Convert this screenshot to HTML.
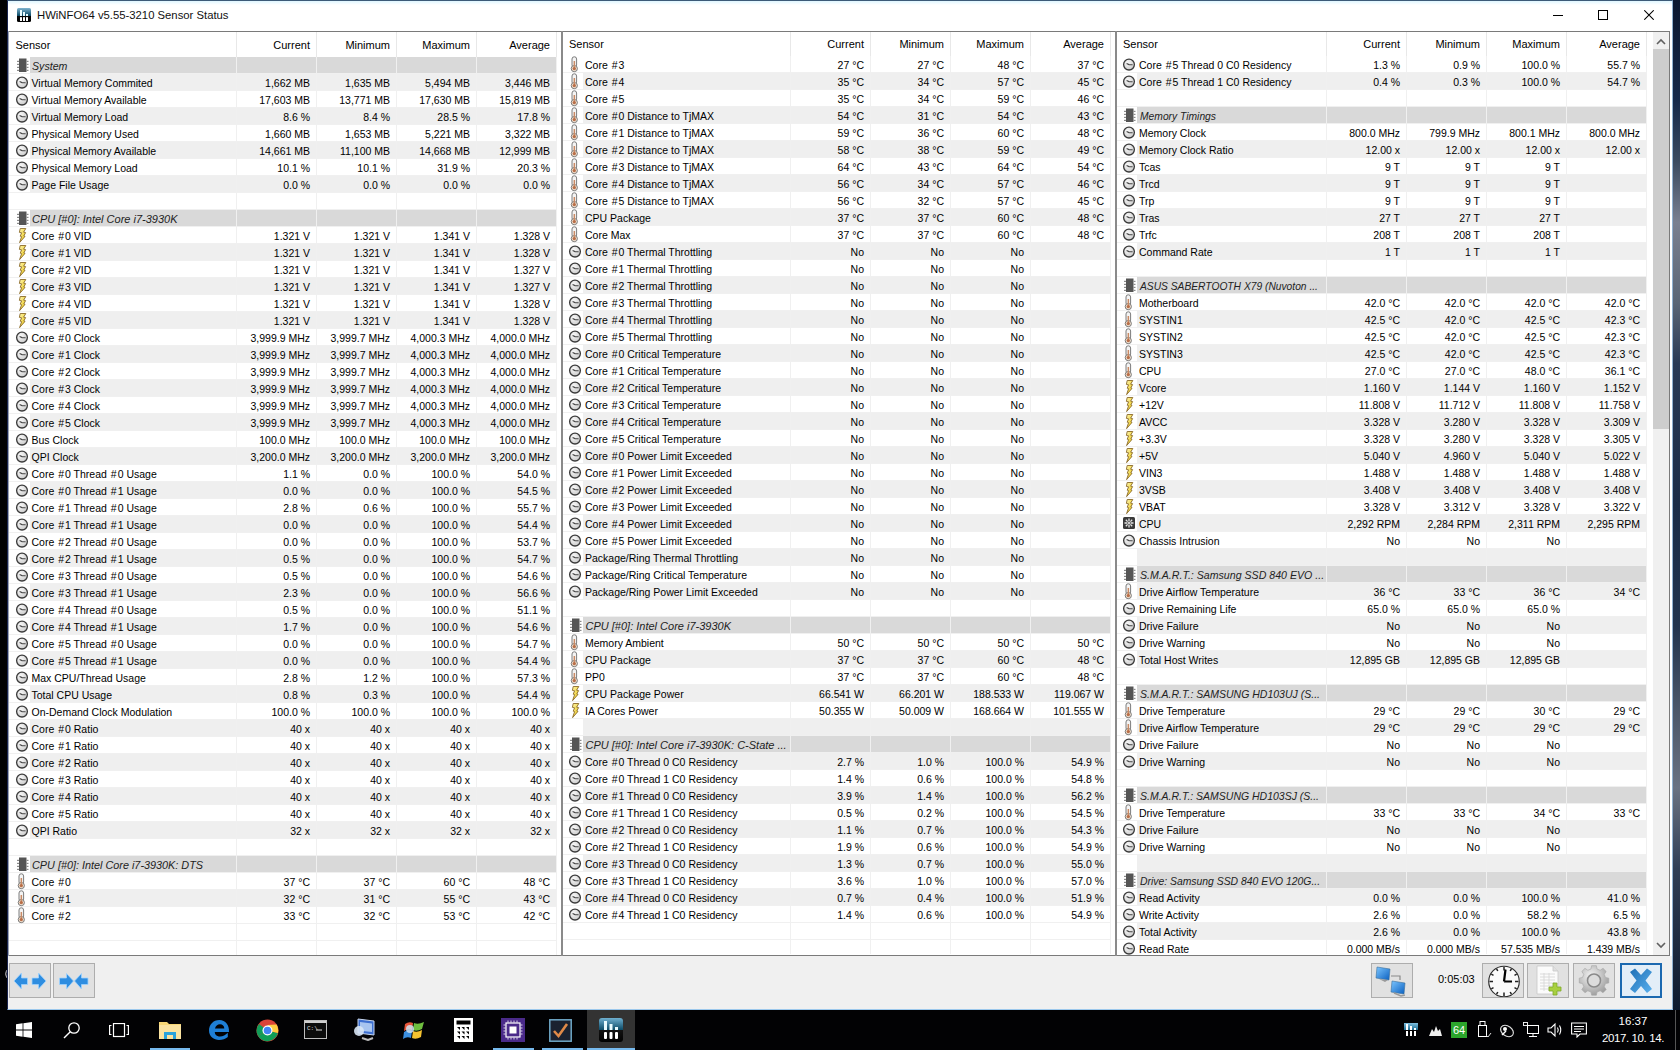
<!DOCTYPE html><html><head><meta charset="utf-8"><style>
*{margin:0;padding:0;box-sizing:border-box}
html,body{width:1680px;height:1050px;overflow:hidden;background:#000}
body{position:relative;font-family:"Liberation Sans",sans-serif;color:#000}
.abs{position:absolute}
#win{position:absolute;left:7px;top:0;width:1666px;height:1010px;background:#fff;border:1px solid #3c5a78;border-left-color:#1a2550;border-right-color:#8fb0d0;border-bottom-color:#9cc8ec}
#title{position:absolute;left:8px;top:1px;width:1664px;height:30px;background:#fff}
#ttext{position:absolute;left:37px;top:8px;font-size:11.3px;white-space:nowrap}
#body{position:absolute;left:8px;top:31px;width:1662px;height:925px;background:#fff}
.frame{position:absolute;background:#7a7a7a}
.hsep{position:absolute;top:32px;height:25px;width:1px;background:#e8e8e8}
.vg{position:absolute;top:57px;height:898px;width:1px;background:#f0f0f0}
.hg{position:absolute;height:1px;background:#f0f0f0}
.bg{position:absolute;height:16px}
.grp{background:#d9d9d9}
.str{background:#efefef}
.ht{position:absolute;font-size:11px;line-height:12px;white-space:nowrap}
.t{position:absolute;font-size:10.5px;line-height:16px;height:16px;white-space:nowrap;padding-top:1px}
.it{font-style:italic;font-size:11px;color:#222;transform-origin:0 0}
.r{text-align:right}
.hs{padding:0 1px}
.ic{position:absolute;overflow:visible}
.tb{position:absolute;border:1px solid #adadad;background:#e1e1e1;overflow:hidden}
</style></head><body>

<svg width="0" height="0" style="position:absolute">
<defs>
<radialGradient id="gclk" cx="40%" cy="35%" r="70%"><stop offset="0" stop-color="#fafafa"/><stop offset="1" stop-color="#c8c8c8"/></radialGradient>
<linearGradient id="gvolt" x1="0" y1="0" x2="1" y2="1"><stop offset="0" stop-color="#fff6b0"/><stop offset="1" stop-color="#e8c200"/></linearGradient>
<g id="i-clock"><circle cx="7" cy="7.6" r="5.4" fill="url(#gclk)" stroke="#3a3a3a" stroke-width="1.3"/><path d="M4.6 6.4 L7 7.6 L10.6 7.7" fill="none" stroke="#444" stroke-width="1.1"/></g>
<g id="i-volt"><path d="M3.2 1.5 L8.8 1.5 L6.6 5.2 L8.6 5.6 L6.8 9 L8 9.4 L2.6 15.6 L4.6 9.6 L3.2 9.2 L4.6 5.8 L2.4 5.4 Z" fill="url(#gvolt)" stroke="#8a6a2a" stroke-width="0.9" stroke-linejoin="round"/></g>
<g id="i-temp"><rect x="2" y="0.8" width="4.6" height="10.5" rx="2.2" fill="#f4f4f4" stroke="#6e6e6e" stroke-width="0.9"/><circle cx="4.3" cy="12.6" r="3.1" fill="#f2e2d2" stroke="#6e6e6e" stroke-width="0.9"/><rect x="3.6" y="5" width="1.5" height="7" fill="#c98a64"/><circle cx="4.3" cy="12.6" r="1.7" fill="#b86e48"/></g>
<g id="i-fan"><rect x="1" y="1" width="12" height="12" rx="1.5" fill="#3a3a3a"/><g stroke="#e6e6e6" stroke-width="1.3"><path d="M7 2.5V5.5M7 8.5V11.5M2.5 7H5.5M8.5 7H11.5M3.8 3.8L5.6 5.6M8.4 8.4L10.2 10.2M10.2 3.8L8.4 5.6M5.6 8.4L3.8 10.2"/></g><rect x="6" y="6" width="2" height="2" fill="#ccc"/></g>
<g id="i-chip"><rect x="4" y="1.5" width="7.5" height="13.5" fill="#555"/><g fill="#8a8a8a"><rect x="2" y="3.8" width="2" height="1.2"/><rect x="2" y="6.8" width="2" height="1.2"/><rect x="2" y="9.8" width="2" height="1.2"/><rect x="2" y="12.8" width="2" height="1.2"/><rect x="11.5" y="3.8" width="2" height="1.2"/><rect x="11.5" y="6.8" width="2" height="1.2"/><rect x="11.5" y="9.8" width="2" height="1.2"/><rect x="11.5" y="12.8" width="2" height="1.2"/></g></g>
</defs></svg>


<div class="abs" style="left:0;top:0;width:7px;height:1010px;background:#010203"></div>
<svg class="abs" style="left:2px;top:968px" width="6" height="12" viewBox="0 0 6 12"><path d="M5.5 1.5 Q2 5.8 5.5 10.5" fill="none" stroke="#d8d8e0" stroke-width="1"/></svg>
<div class="abs" style="left:1673px;top:0;width:7px;height:1010px;background:linear-gradient(180deg,#0c1830 0%,#16294a 10%,#3a4a60 16%,#7a8090 22%,#5a6575 30%,#2a3a55 36%,#1a2c48 50%,#22344e 62%,#4a5668 70%,#6a7282 78%,#303e55 86%,#0e1a2e 100%)"></div>

<div id="win"></div>

<div class="abs" style="left:8px;top:1px;width:1664px;height:4px;background:linear-gradient(#dff6ff,#fff)"></div>
<svg class="abs" style="left:17px;top:8px" width="14" height="14" viewBox="0 0 14 14">
 <defs><linearGradient id="gti" x1="0" y1="0" x2="0" y2="1"><stop offset="0" stop-color="#7fb4d0"/><stop offset="0.55" stop-color="#0b4a66"/><stop offset="0.56" stop-color="#050505"/><stop offset="1" stop-color="#000"/></linearGradient></defs>
 <rect x="0" y="0" width="14" height="14" rx="1.5" fill="url(#gti)"/>
 <rect x="3" y="2" width="2" height="6" fill="#e8fbff"/><rect x="6" y="4" width="2" height="4" fill="#e8fbff"/><rect x="9" y="6" width="2" height="2" fill="#e8fbff"/>
 <rect x="3" y="9" width="2" height="4" rx="0.6" fill="#fff"/><rect x="6" y="9" width="2" height="4" rx="0.6" fill="#fff"/><rect x="9" y="9" width="2" height="4" rx="0.6" fill="#fff"/>
</svg>
<div class="abs" style="left:37px;top:9px;font-size:11.3px;white-space:nowrap;color:#111">HWiNFO64 v5.55-3210 Sensor Status</div>
<div class="abs" style="left:1553px;top:15px;width:10px;height:1px;background:#000"></div>
<div class="abs" style="left:1598px;top:10px;width:10px;height:10px;border:1px solid #000"></div>
<svg class="abs" style="left:1644px;top:10px" width="10" height="10" viewBox="0 0 10 10"><path d="M0.3 0.3L9.7 9.7M9.7 0.3L0.3 9.7" stroke="#000" stroke-width="1.05"/></svg>

<div id="panels" style="position:absolute;left:0;top:0;width:1680px;height:956px;overflow:hidden">
<div class="abs" style="left:8px;top:31px;width:1662px;height:925px;background:#fff"></div>
<div class="hsep" style="left:236px;height:25px"></div>
<div class="ht" style="left:15.5px;top:39px">Sensor</div>
<div class="hsep" style="left:316px;height:25px"></div>
<div class="ht r" style="left:236px;width:74px;top:39px">Current</div>
<div class="hsep" style="left:396px;height:25px"></div>
<div class="ht r" style="left:316px;width:74px;top:39px">Minimum</div>
<div class="hsep" style="left:476px;height:25px"></div>
<div class="ht r" style="left:396px;width:74px;top:39px">Maximum</div>
<div class="hsep" style="left:556px;height:25px"></div>
<div class="ht r" style="left:476px;width:74px;top:39px">Average</div>
<div class="vg" style="left:236px;top:57px"></div>
<div class="vg" style="left:316px;top:57px"></div>
<div class="vg" style="left:396px;top:57px"></div>
<div class="vg" style="left:476px;top:57px"></div>
<div class="vg" style="left:556px;top:57px"></div>
<div class="hg" style="left:9px;width:548px;top:73px"></div>
<div class="hg" style="left:9px;width:548px;top:90px"></div>
<div class="hg" style="left:9px;width:548px;top:107px"></div>
<div class="hg" style="left:9px;width:548px;top:124px"></div>
<div class="hg" style="left:9px;width:548px;top:141px"></div>
<div class="hg" style="left:9px;width:548px;top:158px"></div>
<div class="hg" style="left:9px;width:548px;top:175px"></div>
<div class="hg" style="left:9px;width:548px;top:192px"></div>
<div class="hg" style="left:9px;width:548px;top:209px"></div>
<div class="hg" style="left:9px;width:548px;top:226px"></div>
<div class="hg" style="left:9px;width:548px;top:243px"></div>
<div class="hg" style="left:9px;width:548px;top:260px"></div>
<div class="hg" style="left:9px;width:548px;top:277px"></div>
<div class="hg" style="left:9px;width:548px;top:294px"></div>
<div class="hg" style="left:9px;width:548px;top:311px"></div>
<div class="hg" style="left:9px;width:548px;top:328px"></div>
<div class="hg" style="left:9px;width:548px;top:345px"></div>
<div class="hg" style="left:9px;width:548px;top:362px"></div>
<div class="hg" style="left:9px;width:548px;top:379px"></div>
<div class="hg" style="left:9px;width:548px;top:396px"></div>
<div class="hg" style="left:9px;width:548px;top:413px"></div>
<div class="hg" style="left:9px;width:548px;top:430px"></div>
<div class="hg" style="left:9px;width:548px;top:447px"></div>
<div class="hg" style="left:9px;width:548px;top:464px"></div>
<div class="hg" style="left:9px;width:548px;top:481px"></div>
<div class="hg" style="left:9px;width:548px;top:498px"></div>
<div class="hg" style="left:9px;width:548px;top:515px"></div>
<div class="hg" style="left:9px;width:548px;top:532px"></div>
<div class="hg" style="left:9px;width:548px;top:549px"></div>
<div class="hg" style="left:9px;width:548px;top:566px"></div>
<div class="hg" style="left:9px;width:548px;top:583px"></div>
<div class="hg" style="left:9px;width:548px;top:600px"></div>
<div class="hg" style="left:9px;width:548px;top:617px"></div>
<div class="hg" style="left:9px;width:548px;top:634px"></div>
<div class="hg" style="left:9px;width:548px;top:651px"></div>
<div class="hg" style="left:9px;width:548px;top:668px"></div>
<div class="hg" style="left:9px;width:548px;top:685px"></div>
<div class="hg" style="left:9px;width:548px;top:702px"></div>
<div class="hg" style="left:9px;width:548px;top:719px"></div>
<div class="hg" style="left:9px;width:548px;top:736px"></div>
<div class="hg" style="left:9px;width:548px;top:753px"></div>
<div class="hg" style="left:9px;width:548px;top:770px"></div>
<div class="hg" style="left:9px;width:548px;top:787px"></div>
<div class="hg" style="left:9px;width:548px;top:804px"></div>
<div class="hg" style="left:9px;width:548px;top:821px"></div>
<div class="hg" style="left:9px;width:548px;top:838px"></div>
<div class="hg" style="left:9px;width:548px;top:855px"></div>
<div class="hg" style="left:9px;width:548px;top:872px"></div>
<div class="hg" style="left:9px;width:548px;top:889px"></div>
<div class="hg" style="left:9px;width:548px;top:906px"></div>
<div class="hg" style="left:9px;width:548px;top:923px"></div>
<div class="hg" style="left:9px;width:548px;top:940px"></div>
<div class="bg grp" style="left:30px;top:57px;width:206px"></div>
<div class="bg grp" style="left:237px;top:57px;width:79px"></div>
<div class="bg grp" style="left:317px;top:57px;width:79px"></div>
<div class="bg grp" style="left:397px;top:57px;width:79px"></div>
<div class="bg grp" style="left:477px;top:57px;width:79px"></div>
<svg class="ic" width="14" height="16" viewBox="0 0 14 16" style="left:15px;top:57px"><use href="#i-chip"/></svg>
<div class="t it" style="left:32.0px;top:57px;transform:scaleX(0.965)">System</div>
<div class="bg str" style="left:30px;top:74px;width:206px"></div>
<div class="bg str" style="left:237px;top:74px;width:79px"></div>
<div class="bg str" style="left:317px;top:74px;width:79px"></div>
<div class="bg str" style="left:397px;top:74px;width:79px"></div>
<div class="bg str" style="left:477px;top:74px;width:79px"></div>
<svg class="ic" width="14" height="14" viewBox="0 0 14 14" style="left:15px;top:75px"><use href="#i-clock"/></svg>
<div class="t" style="left:31.5px;top:74px">Virtual Memory Commited</div>
<div class="t r" style="left:236px;width:74px;top:74px">1,662 MB</div>
<div class="t r" style="left:316px;width:74px;top:74px">1,635 MB</div>
<div class="t r" style="left:396px;width:74px;top:74px">5,494 MB</div>
<div class="t r" style="left:476px;width:74px;top:74px">3,446 MB</div>
<svg class="ic" width="14" height="14" viewBox="0 0 14 14" style="left:15px;top:92px"><use href="#i-clock"/></svg>
<div class="t" style="left:31.5px;top:91px">Virtual Memory Available</div>
<div class="t r" style="left:236px;width:74px;top:91px">17,603 MB</div>
<div class="t r" style="left:316px;width:74px;top:91px">13,771 MB</div>
<div class="t r" style="left:396px;width:74px;top:91px">17,630 MB</div>
<div class="t r" style="left:476px;width:74px;top:91px">15,819 MB</div>
<div class="bg str" style="left:30px;top:108px;width:206px"></div>
<div class="bg str" style="left:237px;top:108px;width:79px"></div>
<div class="bg str" style="left:317px;top:108px;width:79px"></div>
<div class="bg str" style="left:397px;top:108px;width:79px"></div>
<div class="bg str" style="left:477px;top:108px;width:79px"></div>
<svg class="ic" width="14" height="14" viewBox="0 0 14 14" style="left:15px;top:109px"><use href="#i-clock"/></svg>
<div class="t" style="left:31.5px;top:108px">Virtual Memory Load</div>
<div class="t r" style="left:236px;width:74px;top:108px">8.6 %</div>
<div class="t r" style="left:316px;width:74px;top:108px">8.4 %</div>
<div class="t r" style="left:396px;width:74px;top:108px">28.5 %</div>
<div class="t r" style="left:476px;width:74px;top:108px">17.8 %</div>
<svg class="ic" width="14" height="14" viewBox="0 0 14 14" style="left:15px;top:126px"><use href="#i-clock"/></svg>
<div class="t" style="left:31.5px;top:125px">Physical Memory Used</div>
<div class="t r" style="left:236px;width:74px;top:125px">1,660 MB</div>
<div class="t r" style="left:316px;width:74px;top:125px">1,653 MB</div>
<div class="t r" style="left:396px;width:74px;top:125px">5,221 MB</div>
<div class="t r" style="left:476px;width:74px;top:125px">3,322 MB</div>
<div class="bg str" style="left:30px;top:142px;width:206px"></div>
<div class="bg str" style="left:237px;top:142px;width:79px"></div>
<div class="bg str" style="left:317px;top:142px;width:79px"></div>
<div class="bg str" style="left:397px;top:142px;width:79px"></div>
<div class="bg str" style="left:477px;top:142px;width:79px"></div>
<svg class="ic" width="14" height="14" viewBox="0 0 14 14" style="left:15px;top:143px"><use href="#i-clock"/></svg>
<div class="t" style="left:31.5px;top:142px">Physical Memory Available</div>
<div class="t r" style="left:236px;width:74px;top:142px">14,661 MB</div>
<div class="t r" style="left:316px;width:74px;top:142px">11,100 MB</div>
<div class="t r" style="left:396px;width:74px;top:142px">14,668 MB</div>
<div class="t r" style="left:476px;width:74px;top:142px">12,999 MB</div>
<svg class="ic" width="14" height="14" viewBox="0 0 14 14" style="left:15px;top:160px"><use href="#i-clock"/></svg>
<div class="t" style="left:31.5px;top:159px">Physical Memory Load</div>
<div class="t r" style="left:236px;width:74px;top:159px">10.1 %</div>
<div class="t r" style="left:316px;width:74px;top:159px">10.1 %</div>
<div class="t r" style="left:396px;width:74px;top:159px">31.9 %</div>
<div class="t r" style="left:476px;width:74px;top:159px">20.3 %</div>
<div class="bg str" style="left:30px;top:176px;width:206px"></div>
<div class="bg str" style="left:237px;top:176px;width:79px"></div>
<div class="bg str" style="left:317px;top:176px;width:79px"></div>
<div class="bg str" style="left:397px;top:176px;width:79px"></div>
<div class="bg str" style="left:477px;top:176px;width:79px"></div>
<svg class="ic" width="14" height="14" viewBox="0 0 14 14" style="left:15px;top:177px"><use href="#i-clock"/></svg>
<div class="t" style="left:31.5px;top:176px">Page File Usage</div>
<div class="t r" style="left:236px;width:74px;top:176px">0.0 %</div>
<div class="t r" style="left:316px;width:74px;top:176px">0.0 %</div>
<div class="t r" style="left:396px;width:74px;top:176px">0.0 %</div>
<div class="t r" style="left:476px;width:74px;top:176px">0.0 %</div>
<div class="bg grp" style="left:30px;top:210px;width:206px"></div>
<div class="bg grp" style="left:237px;top:210px;width:79px"></div>
<div class="bg grp" style="left:317px;top:210px;width:79px"></div>
<div class="bg grp" style="left:397px;top:210px;width:79px"></div>
<div class="bg grp" style="left:477px;top:210px;width:79px"></div>
<svg class="ic" width="14" height="16" viewBox="0 0 14 16" style="left:15px;top:210px"><use href="#i-chip"/></svg>
<div class="t it" style="left:32.0px;top:210px;transform:scaleX(1.0)">CPU [#0]: Intel Core i7-3930K</div>
<svg class="ic" width="10" height="17" viewBox="0 0 10 17" style="left:17px;top:227px"><use href="#i-volt"/></svg>
<div class="t" style="left:31.5px;top:227px">Core <span class="hs">#</span>0 VID</div>
<div class="t r" style="left:236px;width:74px;top:227px">1.321 V</div>
<div class="t r" style="left:316px;width:74px;top:227px">1.321 V</div>
<div class="t r" style="left:396px;width:74px;top:227px">1.341 V</div>
<div class="t r" style="left:476px;width:74px;top:227px">1.328 V</div>
<div class="bg str" style="left:30px;top:244px;width:206px"></div>
<div class="bg str" style="left:237px;top:244px;width:79px"></div>
<div class="bg str" style="left:317px;top:244px;width:79px"></div>
<div class="bg str" style="left:397px;top:244px;width:79px"></div>
<div class="bg str" style="left:477px;top:244px;width:79px"></div>
<svg class="ic" width="10" height="17" viewBox="0 0 10 17" style="left:17px;top:244px"><use href="#i-volt"/></svg>
<div class="t" style="left:31.5px;top:244px">Core <span class="hs">#</span>1 VID</div>
<div class="t r" style="left:236px;width:74px;top:244px">1.321 V</div>
<div class="t r" style="left:316px;width:74px;top:244px">1.321 V</div>
<div class="t r" style="left:396px;width:74px;top:244px">1.341 V</div>
<div class="t r" style="left:476px;width:74px;top:244px">1.328 V</div>
<svg class="ic" width="10" height="17" viewBox="0 0 10 17" style="left:17px;top:261px"><use href="#i-volt"/></svg>
<div class="t" style="left:31.5px;top:261px">Core <span class="hs">#</span>2 VID</div>
<div class="t r" style="left:236px;width:74px;top:261px">1.321 V</div>
<div class="t r" style="left:316px;width:74px;top:261px">1.321 V</div>
<div class="t r" style="left:396px;width:74px;top:261px">1.341 V</div>
<div class="t r" style="left:476px;width:74px;top:261px">1.327 V</div>
<div class="bg str" style="left:30px;top:278px;width:206px"></div>
<div class="bg str" style="left:237px;top:278px;width:79px"></div>
<div class="bg str" style="left:317px;top:278px;width:79px"></div>
<div class="bg str" style="left:397px;top:278px;width:79px"></div>
<div class="bg str" style="left:477px;top:278px;width:79px"></div>
<svg class="ic" width="10" height="17" viewBox="0 0 10 17" style="left:17px;top:278px"><use href="#i-volt"/></svg>
<div class="t" style="left:31.5px;top:278px">Core <span class="hs">#</span>3 VID</div>
<div class="t r" style="left:236px;width:74px;top:278px">1.321 V</div>
<div class="t r" style="left:316px;width:74px;top:278px">1.321 V</div>
<div class="t r" style="left:396px;width:74px;top:278px">1.341 V</div>
<div class="t r" style="left:476px;width:74px;top:278px">1.327 V</div>
<svg class="ic" width="10" height="17" viewBox="0 0 10 17" style="left:17px;top:295px"><use href="#i-volt"/></svg>
<div class="t" style="left:31.5px;top:295px">Core <span class="hs">#</span>4 VID</div>
<div class="t r" style="left:236px;width:74px;top:295px">1.321 V</div>
<div class="t r" style="left:316px;width:74px;top:295px">1.321 V</div>
<div class="t r" style="left:396px;width:74px;top:295px">1.341 V</div>
<div class="t r" style="left:476px;width:74px;top:295px">1.328 V</div>
<div class="bg str" style="left:30px;top:312px;width:206px"></div>
<div class="bg str" style="left:237px;top:312px;width:79px"></div>
<div class="bg str" style="left:317px;top:312px;width:79px"></div>
<div class="bg str" style="left:397px;top:312px;width:79px"></div>
<div class="bg str" style="left:477px;top:312px;width:79px"></div>
<svg class="ic" width="10" height="17" viewBox="0 0 10 17" style="left:17px;top:312px"><use href="#i-volt"/></svg>
<div class="t" style="left:31.5px;top:312px">Core <span class="hs">#</span>5 VID</div>
<div class="t r" style="left:236px;width:74px;top:312px">1.321 V</div>
<div class="t r" style="left:316px;width:74px;top:312px">1.321 V</div>
<div class="t r" style="left:396px;width:74px;top:312px">1.341 V</div>
<div class="t r" style="left:476px;width:74px;top:312px">1.328 V</div>
<svg class="ic" width="14" height="14" viewBox="0 0 14 14" style="left:15px;top:330px"><use href="#i-clock"/></svg>
<div class="t" style="left:31.5px;top:329px">Core <span class="hs">#</span>0 Clock</div>
<div class="t r" style="left:236px;width:74px;top:329px">3,999.9 MHz</div>
<div class="t r" style="left:316px;width:74px;top:329px">3,999.7 MHz</div>
<div class="t r" style="left:396px;width:74px;top:329px">4,000.3 MHz</div>
<div class="t r" style="left:476px;width:74px;top:329px">4,000.0 MHz</div>
<div class="bg str" style="left:30px;top:346px;width:206px"></div>
<div class="bg str" style="left:237px;top:346px;width:79px"></div>
<div class="bg str" style="left:317px;top:346px;width:79px"></div>
<div class="bg str" style="left:397px;top:346px;width:79px"></div>
<div class="bg str" style="left:477px;top:346px;width:79px"></div>
<svg class="ic" width="14" height="14" viewBox="0 0 14 14" style="left:15px;top:347px"><use href="#i-clock"/></svg>
<div class="t" style="left:31.5px;top:346px">Core <span class="hs">#</span>1 Clock</div>
<div class="t r" style="left:236px;width:74px;top:346px">3,999.9 MHz</div>
<div class="t r" style="left:316px;width:74px;top:346px">3,999.7 MHz</div>
<div class="t r" style="left:396px;width:74px;top:346px">4,000.3 MHz</div>
<div class="t r" style="left:476px;width:74px;top:346px">4,000.0 MHz</div>
<svg class="ic" width="14" height="14" viewBox="0 0 14 14" style="left:15px;top:364px"><use href="#i-clock"/></svg>
<div class="t" style="left:31.5px;top:363px">Core <span class="hs">#</span>2 Clock</div>
<div class="t r" style="left:236px;width:74px;top:363px">3,999.9 MHz</div>
<div class="t r" style="left:316px;width:74px;top:363px">3,999.7 MHz</div>
<div class="t r" style="left:396px;width:74px;top:363px">4,000.3 MHz</div>
<div class="t r" style="left:476px;width:74px;top:363px">4,000.0 MHz</div>
<div class="bg str" style="left:30px;top:380px;width:206px"></div>
<div class="bg str" style="left:237px;top:380px;width:79px"></div>
<div class="bg str" style="left:317px;top:380px;width:79px"></div>
<div class="bg str" style="left:397px;top:380px;width:79px"></div>
<div class="bg str" style="left:477px;top:380px;width:79px"></div>
<svg class="ic" width="14" height="14" viewBox="0 0 14 14" style="left:15px;top:381px"><use href="#i-clock"/></svg>
<div class="t" style="left:31.5px;top:380px">Core <span class="hs">#</span>3 Clock</div>
<div class="t r" style="left:236px;width:74px;top:380px">3,999.9 MHz</div>
<div class="t r" style="left:316px;width:74px;top:380px">3,999.7 MHz</div>
<div class="t r" style="left:396px;width:74px;top:380px">4,000.3 MHz</div>
<div class="t r" style="left:476px;width:74px;top:380px">4,000.0 MHz</div>
<svg class="ic" width="14" height="14" viewBox="0 0 14 14" style="left:15px;top:398px"><use href="#i-clock"/></svg>
<div class="t" style="left:31.5px;top:397px">Core <span class="hs">#</span>4 Clock</div>
<div class="t r" style="left:236px;width:74px;top:397px">3,999.9 MHz</div>
<div class="t r" style="left:316px;width:74px;top:397px">3,999.7 MHz</div>
<div class="t r" style="left:396px;width:74px;top:397px">4,000.3 MHz</div>
<div class="t r" style="left:476px;width:74px;top:397px">4,000.0 MHz</div>
<div class="bg str" style="left:30px;top:414px;width:206px"></div>
<div class="bg str" style="left:237px;top:414px;width:79px"></div>
<div class="bg str" style="left:317px;top:414px;width:79px"></div>
<div class="bg str" style="left:397px;top:414px;width:79px"></div>
<div class="bg str" style="left:477px;top:414px;width:79px"></div>
<svg class="ic" width="14" height="14" viewBox="0 0 14 14" style="left:15px;top:415px"><use href="#i-clock"/></svg>
<div class="t" style="left:31.5px;top:414px">Core <span class="hs">#</span>5 Clock</div>
<div class="t r" style="left:236px;width:74px;top:414px">3,999.9 MHz</div>
<div class="t r" style="left:316px;width:74px;top:414px">3,999.7 MHz</div>
<div class="t r" style="left:396px;width:74px;top:414px">4,000.3 MHz</div>
<div class="t r" style="left:476px;width:74px;top:414px">4,000.0 MHz</div>
<svg class="ic" width="14" height="14" viewBox="0 0 14 14" style="left:15px;top:432px"><use href="#i-clock"/></svg>
<div class="t" style="left:31.5px;top:431px">Bus Clock</div>
<div class="t r" style="left:236px;width:74px;top:431px">100.0 MHz</div>
<div class="t r" style="left:316px;width:74px;top:431px">100.0 MHz</div>
<div class="t r" style="left:396px;width:74px;top:431px">100.0 MHz</div>
<div class="t r" style="left:476px;width:74px;top:431px">100.0 MHz</div>
<div class="bg str" style="left:30px;top:448px;width:206px"></div>
<div class="bg str" style="left:237px;top:448px;width:79px"></div>
<div class="bg str" style="left:317px;top:448px;width:79px"></div>
<div class="bg str" style="left:397px;top:448px;width:79px"></div>
<div class="bg str" style="left:477px;top:448px;width:79px"></div>
<svg class="ic" width="14" height="14" viewBox="0 0 14 14" style="left:15px;top:449px"><use href="#i-clock"/></svg>
<div class="t" style="left:31.5px;top:448px">QPI Clock</div>
<div class="t r" style="left:236px;width:74px;top:448px">3,200.0 MHz</div>
<div class="t r" style="left:316px;width:74px;top:448px">3,200.0 MHz</div>
<div class="t r" style="left:396px;width:74px;top:448px">3,200.0 MHz</div>
<div class="t r" style="left:476px;width:74px;top:448px">3,200.0 MHz</div>
<svg class="ic" width="14" height="14" viewBox="0 0 14 14" style="left:15px;top:466px"><use href="#i-clock"/></svg>
<div class="t" style="left:31.5px;top:465px">Core <span class="hs">#</span>0 Thread <span class="hs">#</span>0 Usage</div>
<div class="t r" style="left:236px;width:74px;top:465px">1.1 %</div>
<div class="t r" style="left:316px;width:74px;top:465px">0.0 %</div>
<div class="t r" style="left:396px;width:74px;top:465px">100.0 %</div>
<div class="t r" style="left:476px;width:74px;top:465px">54.0 %</div>
<div class="bg str" style="left:30px;top:482px;width:206px"></div>
<div class="bg str" style="left:237px;top:482px;width:79px"></div>
<div class="bg str" style="left:317px;top:482px;width:79px"></div>
<div class="bg str" style="left:397px;top:482px;width:79px"></div>
<div class="bg str" style="left:477px;top:482px;width:79px"></div>
<svg class="ic" width="14" height="14" viewBox="0 0 14 14" style="left:15px;top:483px"><use href="#i-clock"/></svg>
<div class="t" style="left:31.5px;top:482px">Core <span class="hs">#</span>0 Thread <span class="hs">#</span>1 Usage</div>
<div class="t r" style="left:236px;width:74px;top:482px">0.0 %</div>
<div class="t r" style="left:316px;width:74px;top:482px">0.0 %</div>
<div class="t r" style="left:396px;width:74px;top:482px">100.0 %</div>
<div class="t r" style="left:476px;width:74px;top:482px">54.5 %</div>
<svg class="ic" width="14" height="14" viewBox="0 0 14 14" style="left:15px;top:500px"><use href="#i-clock"/></svg>
<div class="t" style="left:31.5px;top:499px">Core <span class="hs">#</span>1 Thread <span class="hs">#</span>0 Usage</div>
<div class="t r" style="left:236px;width:74px;top:499px">2.8 %</div>
<div class="t r" style="left:316px;width:74px;top:499px">0.6 %</div>
<div class="t r" style="left:396px;width:74px;top:499px">100.0 %</div>
<div class="t r" style="left:476px;width:74px;top:499px">55.7 %</div>
<div class="bg str" style="left:30px;top:516px;width:206px"></div>
<div class="bg str" style="left:237px;top:516px;width:79px"></div>
<div class="bg str" style="left:317px;top:516px;width:79px"></div>
<div class="bg str" style="left:397px;top:516px;width:79px"></div>
<div class="bg str" style="left:477px;top:516px;width:79px"></div>
<svg class="ic" width="14" height="14" viewBox="0 0 14 14" style="left:15px;top:517px"><use href="#i-clock"/></svg>
<div class="t" style="left:31.5px;top:516px">Core <span class="hs">#</span>1 Thread <span class="hs">#</span>1 Usage</div>
<div class="t r" style="left:236px;width:74px;top:516px">0.0 %</div>
<div class="t r" style="left:316px;width:74px;top:516px">0.0 %</div>
<div class="t r" style="left:396px;width:74px;top:516px">100.0 %</div>
<div class="t r" style="left:476px;width:74px;top:516px">54.4 %</div>
<svg class="ic" width="14" height="14" viewBox="0 0 14 14" style="left:15px;top:534px"><use href="#i-clock"/></svg>
<div class="t" style="left:31.5px;top:533px">Core <span class="hs">#</span>2 Thread <span class="hs">#</span>0 Usage</div>
<div class="t r" style="left:236px;width:74px;top:533px">0.0 %</div>
<div class="t r" style="left:316px;width:74px;top:533px">0.0 %</div>
<div class="t r" style="left:396px;width:74px;top:533px">100.0 %</div>
<div class="t r" style="left:476px;width:74px;top:533px">53.7 %</div>
<div class="bg str" style="left:30px;top:550px;width:206px"></div>
<div class="bg str" style="left:237px;top:550px;width:79px"></div>
<div class="bg str" style="left:317px;top:550px;width:79px"></div>
<div class="bg str" style="left:397px;top:550px;width:79px"></div>
<div class="bg str" style="left:477px;top:550px;width:79px"></div>
<svg class="ic" width="14" height="14" viewBox="0 0 14 14" style="left:15px;top:551px"><use href="#i-clock"/></svg>
<div class="t" style="left:31.5px;top:550px">Core <span class="hs">#</span>2 Thread <span class="hs">#</span>1 Usage</div>
<div class="t r" style="left:236px;width:74px;top:550px">0.5 %</div>
<div class="t r" style="left:316px;width:74px;top:550px">0.0 %</div>
<div class="t r" style="left:396px;width:74px;top:550px">100.0 %</div>
<div class="t r" style="left:476px;width:74px;top:550px">54.7 %</div>
<svg class="ic" width="14" height="14" viewBox="0 0 14 14" style="left:15px;top:568px"><use href="#i-clock"/></svg>
<div class="t" style="left:31.5px;top:567px">Core <span class="hs">#</span>3 Thread <span class="hs">#</span>0 Usage</div>
<div class="t r" style="left:236px;width:74px;top:567px">0.5 %</div>
<div class="t r" style="left:316px;width:74px;top:567px">0.0 %</div>
<div class="t r" style="left:396px;width:74px;top:567px">100.0 %</div>
<div class="t r" style="left:476px;width:74px;top:567px">54.6 %</div>
<div class="bg str" style="left:30px;top:584px;width:206px"></div>
<div class="bg str" style="left:237px;top:584px;width:79px"></div>
<div class="bg str" style="left:317px;top:584px;width:79px"></div>
<div class="bg str" style="left:397px;top:584px;width:79px"></div>
<div class="bg str" style="left:477px;top:584px;width:79px"></div>
<svg class="ic" width="14" height="14" viewBox="0 0 14 14" style="left:15px;top:585px"><use href="#i-clock"/></svg>
<div class="t" style="left:31.5px;top:584px">Core <span class="hs">#</span>3 Thread <span class="hs">#</span>1 Usage</div>
<div class="t r" style="left:236px;width:74px;top:584px">2.3 %</div>
<div class="t r" style="left:316px;width:74px;top:584px">0.0 %</div>
<div class="t r" style="left:396px;width:74px;top:584px">100.0 %</div>
<div class="t r" style="left:476px;width:74px;top:584px">56.6 %</div>
<svg class="ic" width="14" height="14" viewBox="0 0 14 14" style="left:15px;top:602px"><use href="#i-clock"/></svg>
<div class="t" style="left:31.5px;top:601px">Core <span class="hs">#</span>4 Thread <span class="hs">#</span>0 Usage</div>
<div class="t r" style="left:236px;width:74px;top:601px">0.5 %</div>
<div class="t r" style="left:316px;width:74px;top:601px">0.0 %</div>
<div class="t r" style="left:396px;width:74px;top:601px">100.0 %</div>
<div class="t r" style="left:476px;width:74px;top:601px">51.1 %</div>
<div class="bg str" style="left:30px;top:618px;width:206px"></div>
<div class="bg str" style="left:237px;top:618px;width:79px"></div>
<div class="bg str" style="left:317px;top:618px;width:79px"></div>
<div class="bg str" style="left:397px;top:618px;width:79px"></div>
<div class="bg str" style="left:477px;top:618px;width:79px"></div>
<svg class="ic" width="14" height="14" viewBox="0 0 14 14" style="left:15px;top:619px"><use href="#i-clock"/></svg>
<div class="t" style="left:31.5px;top:618px">Core <span class="hs">#</span>4 Thread <span class="hs">#</span>1 Usage</div>
<div class="t r" style="left:236px;width:74px;top:618px">1.7 %</div>
<div class="t r" style="left:316px;width:74px;top:618px">0.0 %</div>
<div class="t r" style="left:396px;width:74px;top:618px">100.0 %</div>
<div class="t r" style="left:476px;width:74px;top:618px">54.6 %</div>
<svg class="ic" width="14" height="14" viewBox="0 0 14 14" style="left:15px;top:636px"><use href="#i-clock"/></svg>
<div class="t" style="left:31.5px;top:635px">Core <span class="hs">#</span>5 Thread <span class="hs">#</span>0 Usage</div>
<div class="t r" style="left:236px;width:74px;top:635px">0.0 %</div>
<div class="t r" style="left:316px;width:74px;top:635px">0.0 %</div>
<div class="t r" style="left:396px;width:74px;top:635px">100.0 %</div>
<div class="t r" style="left:476px;width:74px;top:635px">54.7 %</div>
<div class="bg str" style="left:30px;top:652px;width:206px"></div>
<div class="bg str" style="left:237px;top:652px;width:79px"></div>
<div class="bg str" style="left:317px;top:652px;width:79px"></div>
<div class="bg str" style="left:397px;top:652px;width:79px"></div>
<div class="bg str" style="left:477px;top:652px;width:79px"></div>
<svg class="ic" width="14" height="14" viewBox="0 0 14 14" style="left:15px;top:653px"><use href="#i-clock"/></svg>
<div class="t" style="left:31.5px;top:652px">Core <span class="hs">#</span>5 Thread <span class="hs">#</span>1 Usage</div>
<div class="t r" style="left:236px;width:74px;top:652px">0.0 %</div>
<div class="t r" style="left:316px;width:74px;top:652px">0.0 %</div>
<div class="t r" style="left:396px;width:74px;top:652px">100.0 %</div>
<div class="t r" style="left:476px;width:74px;top:652px">54.4 %</div>
<svg class="ic" width="14" height="14" viewBox="0 0 14 14" style="left:15px;top:670px"><use href="#i-clock"/></svg>
<div class="t" style="left:31.5px;top:669px">Max CPU/Thread Usage</div>
<div class="t r" style="left:236px;width:74px;top:669px">2.8 %</div>
<div class="t r" style="left:316px;width:74px;top:669px">1.2 %</div>
<div class="t r" style="left:396px;width:74px;top:669px">100.0 %</div>
<div class="t r" style="left:476px;width:74px;top:669px">57.3 %</div>
<div class="bg str" style="left:30px;top:686px;width:206px"></div>
<div class="bg str" style="left:237px;top:686px;width:79px"></div>
<div class="bg str" style="left:317px;top:686px;width:79px"></div>
<div class="bg str" style="left:397px;top:686px;width:79px"></div>
<div class="bg str" style="left:477px;top:686px;width:79px"></div>
<svg class="ic" width="14" height="14" viewBox="0 0 14 14" style="left:15px;top:687px"><use href="#i-clock"/></svg>
<div class="t" style="left:31.5px;top:686px">Total CPU Usage</div>
<div class="t r" style="left:236px;width:74px;top:686px">0.8 %</div>
<div class="t r" style="left:316px;width:74px;top:686px">0.3 %</div>
<div class="t r" style="left:396px;width:74px;top:686px">100.0 %</div>
<div class="t r" style="left:476px;width:74px;top:686px">54.4 %</div>
<svg class="ic" width="14" height="14" viewBox="0 0 14 14" style="left:15px;top:704px"><use href="#i-clock"/></svg>
<div class="t" style="left:31.5px;top:703px">On-Demand Clock Modulation</div>
<div class="t r" style="left:236px;width:74px;top:703px">100.0 %</div>
<div class="t r" style="left:316px;width:74px;top:703px">100.0 %</div>
<div class="t r" style="left:396px;width:74px;top:703px">100.0 %</div>
<div class="t r" style="left:476px;width:74px;top:703px">100.0 %</div>
<div class="bg str" style="left:30px;top:720px;width:206px"></div>
<div class="bg str" style="left:237px;top:720px;width:79px"></div>
<div class="bg str" style="left:317px;top:720px;width:79px"></div>
<div class="bg str" style="left:397px;top:720px;width:79px"></div>
<div class="bg str" style="left:477px;top:720px;width:79px"></div>
<svg class="ic" width="14" height="14" viewBox="0 0 14 14" style="left:15px;top:721px"><use href="#i-clock"/></svg>
<div class="t" style="left:31.5px;top:720px">Core <span class="hs">#</span>0 Ratio</div>
<div class="t r" style="left:236px;width:74px;top:720px">40 x</div>
<div class="t r" style="left:316px;width:74px;top:720px">40 x</div>
<div class="t r" style="left:396px;width:74px;top:720px">40 x</div>
<div class="t r" style="left:476px;width:74px;top:720px">40 x</div>
<svg class="ic" width="14" height="14" viewBox="0 0 14 14" style="left:15px;top:738px"><use href="#i-clock"/></svg>
<div class="t" style="left:31.5px;top:737px">Core <span class="hs">#</span>1 Ratio</div>
<div class="t r" style="left:236px;width:74px;top:737px">40 x</div>
<div class="t r" style="left:316px;width:74px;top:737px">40 x</div>
<div class="t r" style="left:396px;width:74px;top:737px">40 x</div>
<div class="t r" style="left:476px;width:74px;top:737px">40 x</div>
<div class="bg str" style="left:30px;top:754px;width:206px"></div>
<div class="bg str" style="left:237px;top:754px;width:79px"></div>
<div class="bg str" style="left:317px;top:754px;width:79px"></div>
<div class="bg str" style="left:397px;top:754px;width:79px"></div>
<div class="bg str" style="left:477px;top:754px;width:79px"></div>
<svg class="ic" width="14" height="14" viewBox="0 0 14 14" style="left:15px;top:755px"><use href="#i-clock"/></svg>
<div class="t" style="left:31.5px;top:754px">Core <span class="hs">#</span>2 Ratio</div>
<div class="t r" style="left:236px;width:74px;top:754px">40 x</div>
<div class="t r" style="left:316px;width:74px;top:754px">40 x</div>
<div class="t r" style="left:396px;width:74px;top:754px">40 x</div>
<div class="t r" style="left:476px;width:74px;top:754px">40 x</div>
<svg class="ic" width="14" height="14" viewBox="0 0 14 14" style="left:15px;top:772px"><use href="#i-clock"/></svg>
<div class="t" style="left:31.5px;top:771px">Core <span class="hs">#</span>3 Ratio</div>
<div class="t r" style="left:236px;width:74px;top:771px">40 x</div>
<div class="t r" style="left:316px;width:74px;top:771px">40 x</div>
<div class="t r" style="left:396px;width:74px;top:771px">40 x</div>
<div class="t r" style="left:476px;width:74px;top:771px">40 x</div>
<div class="bg str" style="left:30px;top:788px;width:206px"></div>
<div class="bg str" style="left:237px;top:788px;width:79px"></div>
<div class="bg str" style="left:317px;top:788px;width:79px"></div>
<div class="bg str" style="left:397px;top:788px;width:79px"></div>
<div class="bg str" style="left:477px;top:788px;width:79px"></div>
<svg class="ic" width="14" height="14" viewBox="0 0 14 14" style="left:15px;top:789px"><use href="#i-clock"/></svg>
<div class="t" style="left:31.5px;top:788px">Core <span class="hs">#</span>4 Ratio</div>
<div class="t r" style="left:236px;width:74px;top:788px">40 x</div>
<div class="t r" style="left:316px;width:74px;top:788px">40 x</div>
<div class="t r" style="left:396px;width:74px;top:788px">40 x</div>
<div class="t r" style="left:476px;width:74px;top:788px">40 x</div>
<svg class="ic" width="14" height="14" viewBox="0 0 14 14" style="left:15px;top:806px"><use href="#i-clock"/></svg>
<div class="t" style="left:31.5px;top:805px">Core <span class="hs">#</span>5 Ratio</div>
<div class="t r" style="left:236px;width:74px;top:805px">40 x</div>
<div class="t r" style="left:316px;width:74px;top:805px">40 x</div>
<div class="t r" style="left:396px;width:74px;top:805px">40 x</div>
<div class="t r" style="left:476px;width:74px;top:805px">40 x</div>
<div class="bg str" style="left:30px;top:822px;width:206px"></div>
<div class="bg str" style="left:237px;top:822px;width:79px"></div>
<div class="bg str" style="left:317px;top:822px;width:79px"></div>
<div class="bg str" style="left:397px;top:822px;width:79px"></div>
<div class="bg str" style="left:477px;top:822px;width:79px"></div>
<svg class="ic" width="14" height="14" viewBox="0 0 14 14" style="left:15px;top:823px"><use href="#i-clock"/></svg>
<div class="t" style="left:31.5px;top:822px">QPI Ratio</div>
<div class="t r" style="left:236px;width:74px;top:822px">32 x</div>
<div class="t r" style="left:316px;width:74px;top:822px">32 x</div>
<div class="t r" style="left:396px;width:74px;top:822px">32 x</div>
<div class="t r" style="left:476px;width:74px;top:822px">32 x</div>
<div class="bg grp" style="left:30px;top:856px;width:206px"></div>
<div class="bg grp" style="left:237px;top:856px;width:79px"></div>
<div class="bg grp" style="left:317px;top:856px;width:79px"></div>
<div class="bg grp" style="left:397px;top:856px;width:79px"></div>
<div class="bg grp" style="left:477px;top:856px;width:79px"></div>
<svg class="ic" width="14" height="16" viewBox="0 0 14 16" style="left:15px;top:856px"><use href="#i-chip"/></svg>
<div class="t it" style="left:32.0px;top:856px;transform:scaleX(0.985)">CPU [#0]: Intel Core i7-3930K: DTS</div>
<svg class="ic" width="9" height="17" viewBox="0 0 9 17" style="left:17px;top:873px"><use href="#i-temp"/></svg>
<div class="t" style="left:31.5px;top:873px">Core <span class="hs">#</span>0</div>
<div class="t r" style="left:236px;width:74px;top:873px">37 °C</div>
<div class="t r" style="left:316px;width:74px;top:873px">37 °C</div>
<div class="t r" style="left:396px;width:74px;top:873px">60 °C</div>
<div class="t r" style="left:476px;width:74px;top:873px">48 °C</div>
<div class="bg str" style="left:30px;top:890px;width:206px"></div>
<div class="bg str" style="left:237px;top:890px;width:79px"></div>
<div class="bg str" style="left:317px;top:890px;width:79px"></div>
<div class="bg str" style="left:397px;top:890px;width:79px"></div>
<div class="bg str" style="left:477px;top:890px;width:79px"></div>
<svg class="ic" width="9" height="17" viewBox="0 0 9 17" style="left:17px;top:890px"><use href="#i-temp"/></svg>
<div class="t" style="left:31.5px;top:890px">Core <span class="hs">#</span>1</div>
<div class="t r" style="left:236px;width:74px;top:890px">32 °C</div>
<div class="t r" style="left:316px;width:74px;top:890px">31 °C</div>
<div class="t r" style="left:396px;width:74px;top:890px">55 °C</div>
<div class="t r" style="left:476px;width:74px;top:890px">43 °C</div>
<svg class="ic" width="9" height="17" viewBox="0 0 9 17" style="left:17px;top:907px"><use href="#i-temp"/></svg>
<div class="t" style="left:31.5px;top:907px">Core <span class="hs">#</span>2</div>
<div class="t r" style="left:236px;width:74px;top:907px">33 °C</div>
<div class="t r" style="left:316px;width:74px;top:907px">32 °C</div>
<div class="t r" style="left:396px;width:74px;top:907px">53 °C</div>
<div class="t r" style="left:476px;width:74px;top:907px">42 °C</div>
<div class="hsep" style="left:790px;height:24px"></div>
<div class="ht" style="left:569px;top:38px">Sensor</div>
<div class="hsep" style="left:870px;height:24px"></div>
<div class="ht r" style="left:790px;width:74px;top:38px">Current</div>
<div class="hsep" style="left:950px;height:24px"></div>
<div class="ht r" style="left:870px;width:74px;top:38px">Minimum</div>
<div class="hsep" style="left:1030px;height:24px"></div>
<div class="ht r" style="left:950px;width:74px;top:38px">Maximum</div>
<div class="hsep" style="left:1110px;height:24px"></div>
<div class="ht r" style="left:1030px;width:74px;top:38px">Average</div>
<div class="vg" style="left:790px;top:56px"></div>
<div class="vg" style="left:870px;top:56px"></div>
<div class="vg" style="left:950px;top:56px"></div>
<div class="vg" style="left:1030px;top:56px"></div>
<div class="vg" style="left:1110px;top:56px"></div>
<div class="hg" style="left:563px;width:548px;top:72px"></div>
<div class="hg" style="left:563px;width:548px;top:89px"></div>
<div class="hg" style="left:563px;width:548px;top:106px"></div>
<div class="hg" style="left:563px;width:548px;top:123px"></div>
<div class="hg" style="left:563px;width:548px;top:140px"></div>
<div class="hg" style="left:563px;width:548px;top:157px"></div>
<div class="hg" style="left:563px;width:548px;top:174px"></div>
<div class="hg" style="left:563px;width:548px;top:191px"></div>
<div class="hg" style="left:563px;width:548px;top:208px"></div>
<div class="hg" style="left:563px;width:548px;top:225px"></div>
<div class="hg" style="left:563px;width:548px;top:242px"></div>
<div class="hg" style="left:563px;width:548px;top:259px"></div>
<div class="hg" style="left:563px;width:548px;top:276px"></div>
<div class="hg" style="left:563px;width:548px;top:293px"></div>
<div class="hg" style="left:563px;width:548px;top:310px"></div>
<div class="hg" style="left:563px;width:548px;top:327px"></div>
<div class="hg" style="left:563px;width:548px;top:344px"></div>
<div class="hg" style="left:563px;width:548px;top:361px"></div>
<div class="hg" style="left:563px;width:548px;top:378px"></div>
<div class="hg" style="left:563px;width:548px;top:395px"></div>
<div class="hg" style="left:563px;width:548px;top:412px"></div>
<div class="hg" style="left:563px;width:548px;top:429px"></div>
<div class="hg" style="left:563px;width:548px;top:446px"></div>
<div class="hg" style="left:563px;width:548px;top:463px"></div>
<div class="hg" style="left:563px;width:548px;top:480px"></div>
<div class="hg" style="left:563px;width:548px;top:497px"></div>
<div class="hg" style="left:563px;width:548px;top:514px"></div>
<div class="hg" style="left:563px;width:548px;top:531px"></div>
<div class="hg" style="left:563px;width:548px;top:548px"></div>
<div class="hg" style="left:563px;width:548px;top:565px"></div>
<div class="hg" style="left:563px;width:548px;top:582px"></div>
<div class="hg" style="left:563px;width:548px;top:599px"></div>
<div class="hg" style="left:563px;width:548px;top:616px"></div>
<div class="hg" style="left:563px;width:548px;top:633px"></div>
<div class="hg" style="left:563px;width:548px;top:650px"></div>
<div class="hg" style="left:563px;width:548px;top:667px"></div>
<div class="hg" style="left:563px;width:548px;top:684px"></div>
<div class="hg" style="left:563px;width:548px;top:701px"></div>
<div class="hg" style="left:563px;width:548px;top:718px"></div>
<div class="hg" style="left:563px;width:548px;top:735px"></div>
<div class="hg" style="left:563px;width:548px;top:752px"></div>
<div class="hg" style="left:563px;width:548px;top:769px"></div>
<div class="hg" style="left:563px;width:548px;top:786px"></div>
<div class="hg" style="left:563px;width:548px;top:803px"></div>
<div class="hg" style="left:563px;width:548px;top:820px"></div>
<div class="hg" style="left:563px;width:548px;top:837px"></div>
<div class="hg" style="left:563px;width:548px;top:854px"></div>
<div class="hg" style="left:563px;width:548px;top:871px"></div>
<div class="hg" style="left:563px;width:548px;top:888px"></div>
<div class="hg" style="left:563px;width:548px;top:905px"></div>
<div class="hg" style="left:563px;width:548px;top:922px"></div>
<div class="hg" style="left:563px;width:548px;top:939px"></div>
<svg class="ic" width="9" height="17" viewBox="0 0 9 17" style="left:570px;top:56px"><use href="#i-temp"/></svg>
<div class="t" style="left:585px;top:56px">Core <span class="hs">#</span>3</div>
<div class="t r" style="left:790px;width:74px;top:56px">27 °C</div>
<div class="t r" style="left:870px;width:74px;top:56px">27 °C</div>
<div class="t r" style="left:950px;width:74px;top:56px">48 °C</div>
<div class="t r" style="left:1030px;width:74px;top:56px">37 °C</div>
<div class="bg str" style="left:583px;top:73px;width:207px"></div>
<div class="bg str" style="left:791px;top:73px;width:79px"></div>
<div class="bg str" style="left:871px;top:73px;width:79px"></div>
<div class="bg str" style="left:951px;top:73px;width:79px"></div>
<div class="bg str" style="left:1031px;top:73px;width:79px"></div>
<svg class="ic" width="9" height="17" viewBox="0 0 9 17" style="left:570px;top:73px"><use href="#i-temp"/></svg>
<div class="t" style="left:585px;top:73px">Core <span class="hs">#</span>4</div>
<div class="t r" style="left:790px;width:74px;top:73px">35 °C</div>
<div class="t r" style="left:870px;width:74px;top:73px">34 °C</div>
<div class="t r" style="left:950px;width:74px;top:73px">57 °C</div>
<div class="t r" style="left:1030px;width:74px;top:73px">45 °C</div>
<svg class="ic" width="9" height="17" viewBox="0 0 9 17" style="left:570px;top:90px"><use href="#i-temp"/></svg>
<div class="t" style="left:585px;top:90px">Core <span class="hs">#</span>5</div>
<div class="t r" style="left:790px;width:74px;top:90px">35 °C</div>
<div class="t r" style="left:870px;width:74px;top:90px">34 °C</div>
<div class="t r" style="left:950px;width:74px;top:90px">59 °C</div>
<div class="t r" style="left:1030px;width:74px;top:90px">46 °C</div>
<div class="bg str" style="left:583px;top:107px;width:207px"></div>
<div class="bg str" style="left:791px;top:107px;width:79px"></div>
<div class="bg str" style="left:871px;top:107px;width:79px"></div>
<div class="bg str" style="left:951px;top:107px;width:79px"></div>
<div class="bg str" style="left:1031px;top:107px;width:79px"></div>
<svg class="ic" width="9" height="17" viewBox="0 0 9 17" style="left:570px;top:107px"><use href="#i-temp"/></svg>
<div class="t" style="left:585px;top:107px">Core <span class="hs">#</span>0 Distance to TjMAX</div>
<div class="t r" style="left:790px;width:74px;top:107px">54 °C</div>
<div class="t r" style="left:870px;width:74px;top:107px">31 °C</div>
<div class="t r" style="left:950px;width:74px;top:107px">54 °C</div>
<div class="t r" style="left:1030px;width:74px;top:107px">43 °C</div>
<svg class="ic" width="9" height="17" viewBox="0 0 9 17" style="left:570px;top:124px"><use href="#i-temp"/></svg>
<div class="t" style="left:585px;top:124px">Core <span class="hs">#</span>1 Distance to TjMAX</div>
<div class="t r" style="left:790px;width:74px;top:124px">59 °C</div>
<div class="t r" style="left:870px;width:74px;top:124px">36 °C</div>
<div class="t r" style="left:950px;width:74px;top:124px">60 °C</div>
<div class="t r" style="left:1030px;width:74px;top:124px">48 °C</div>
<div class="bg str" style="left:583px;top:141px;width:207px"></div>
<div class="bg str" style="left:791px;top:141px;width:79px"></div>
<div class="bg str" style="left:871px;top:141px;width:79px"></div>
<div class="bg str" style="left:951px;top:141px;width:79px"></div>
<div class="bg str" style="left:1031px;top:141px;width:79px"></div>
<svg class="ic" width="9" height="17" viewBox="0 0 9 17" style="left:570px;top:141px"><use href="#i-temp"/></svg>
<div class="t" style="left:585px;top:141px">Core <span class="hs">#</span>2 Distance to TjMAX</div>
<div class="t r" style="left:790px;width:74px;top:141px">58 °C</div>
<div class="t r" style="left:870px;width:74px;top:141px">38 °C</div>
<div class="t r" style="left:950px;width:74px;top:141px">59 °C</div>
<div class="t r" style="left:1030px;width:74px;top:141px">49 °C</div>
<svg class="ic" width="9" height="17" viewBox="0 0 9 17" style="left:570px;top:158px"><use href="#i-temp"/></svg>
<div class="t" style="left:585px;top:158px">Core <span class="hs">#</span>3 Distance to TjMAX</div>
<div class="t r" style="left:790px;width:74px;top:158px">64 °C</div>
<div class="t r" style="left:870px;width:74px;top:158px">43 °C</div>
<div class="t r" style="left:950px;width:74px;top:158px">64 °C</div>
<div class="t r" style="left:1030px;width:74px;top:158px">54 °C</div>
<div class="bg str" style="left:583px;top:175px;width:207px"></div>
<div class="bg str" style="left:791px;top:175px;width:79px"></div>
<div class="bg str" style="left:871px;top:175px;width:79px"></div>
<div class="bg str" style="left:951px;top:175px;width:79px"></div>
<div class="bg str" style="left:1031px;top:175px;width:79px"></div>
<svg class="ic" width="9" height="17" viewBox="0 0 9 17" style="left:570px;top:175px"><use href="#i-temp"/></svg>
<div class="t" style="left:585px;top:175px">Core <span class="hs">#</span>4 Distance to TjMAX</div>
<div class="t r" style="left:790px;width:74px;top:175px">56 °C</div>
<div class="t r" style="left:870px;width:74px;top:175px">34 °C</div>
<div class="t r" style="left:950px;width:74px;top:175px">57 °C</div>
<div class="t r" style="left:1030px;width:74px;top:175px">46 °C</div>
<svg class="ic" width="9" height="17" viewBox="0 0 9 17" style="left:570px;top:192px"><use href="#i-temp"/></svg>
<div class="t" style="left:585px;top:192px">Core <span class="hs">#</span>5 Distance to TjMAX</div>
<div class="t r" style="left:790px;width:74px;top:192px">56 °C</div>
<div class="t r" style="left:870px;width:74px;top:192px">32 °C</div>
<div class="t r" style="left:950px;width:74px;top:192px">57 °C</div>
<div class="t r" style="left:1030px;width:74px;top:192px">45 °C</div>
<div class="bg str" style="left:583px;top:209px;width:207px"></div>
<div class="bg str" style="left:791px;top:209px;width:79px"></div>
<div class="bg str" style="left:871px;top:209px;width:79px"></div>
<div class="bg str" style="left:951px;top:209px;width:79px"></div>
<div class="bg str" style="left:1031px;top:209px;width:79px"></div>
<svg class="ic" width="9" height="17" viewBox="0 0 9 17" style="left:570px;top:209px"><use href="#i-temp"/></svg>
<div class="t" style="left:585px;top:209px">CPU Package</div>
<div class="t r" style="left:790px;width:74px;top:209px">37 °C</div>
<div class="t r" style="left:870px;width:74px;top:209px">37 °C</div>
<div class="t r" style="left:950px;width:74px;top:209px">60 °C</div>
<div class="t r" style="left:1030px;width:74px;top:209px">48 °C</div>
<svg class="ic" width="9" height="17" viewBox="0 0 9 17" style="left:570px;top:226px"><use href="#i-temp"/></svg>
<div class="t" style="left:585px;top:226px">Core Max</div>
<div class="t r" style="left:790px;width:74px;top:226px">37 °C</div>
<div class="t r" style="left:870px;width:74px;top:226px">37 °C</div>
<div class="t r" style="left:950px;width:74px;top:226px">60 °C</div>
<div class="t r" style="left:1030px;width:74px;top:226px">48 °C</div>
<div class="bg str" style="left:583px;top:243px;width:207px"></div>
<div class="bg str" style="left:791px;top:243px;width:79px"></div>
<div class="bg str" style="left:871px;top:243px;width:79px"></div>
<div class="bg str" style="left:951px;top:243px;width:79px"></div>
<div class="bg str" style="left:1031px;top:243px;width:79px"></div>
<svg class="ic" width="14" height="14" viewBox="0 0 14 14" style="left:568px;top:244px"><use href="#i-clock"/></svg>
<div class="t" style="left:585px;top:243px">Core <span class="hs">#</span>0 Thermal Throttling</div>
<div class="t r" style="left:790px;width:74px;top:243px">No</div>
<div class="t r" style="left:870px;width:74px;top:243px">No</div>
<div class="t r" style="left:950px;width:74px;top:243px">No</div>
<svg class="ic" width="14" height="14" viewBox="0 0 14 14" style="left:568px;top:261px"><use href="#i-clock"/></svg>
<div class="t" style="left:585px;top:260px">Core <span class="hs">#</span>1 Thermal Throttling</div>
<div class="t r" style="left:790px;width:74px;top:260px">No</div>
<div class="t r" style="left:870px;width:74px;top:260px">No</div>
<div class="t r" style="left:950px;width:74px;top:260px">No</div>
<div class="bg str" style="left:583px;top:277px;width:207px"></div>
<div class="bg str" style="left:791px;top:277px;width:79px"></div>
<div class="bg str" style="left:871px;top:277px;width:79px"></div>
<div class="bg str" style="left:951px;top:277px;width:79px"></div>
<div class="bg str" style="left:1031px;top:277px;width:79px"></div>
<svg class="ic" width="14" height="14" viewBox="0 0 14 14" style="left:568px;top:278px"><use href="#i-clock"/></svg>
<div class="t" style="left:585px;top:277px">Core <span class="hs">#</span>2 Thermal Throttling</div>
<div class="t r" style="left:790px;width:74px;top:277px">No</div>
<div class="t r" style="left:870px;width:74px;top:277px">No</div>
<div class="t r" style="left:950px;width:74px;top:277px">No</div>
<svg class="ic" width="14" height="14" viewBox="0 0 14 14" style="left:568px;top:295px"><use href="#i-clock"/></svg>
<div class="t" style="left:585px;top:294px">Core <span class="hs">#</span>3 Thermal Throttling</div>
<div class="t r" style="left:790px;width:74px;top:294px">No</div>
<div class="t r" style="left:870px;width:74px;top:294px">No</div>
<div class="t r" style="left:950px;width:74px;top:294px">No</div>
<div class="bg str" style="left:583px;top:311px;width:207px"></div>
<div class="bg str" style="left:791px;top:311px;width:79px"></div>
<div class="bg str" style="left:871px;top:311px;width:79px"></div>
<div class="bg str" style="left:951px;top:311px;width:79px"></div>
<div class="bg str" style="left:1031px;top:311px;width:79px"></div>
<svg class="ic" width="14" height="14" viewBox="0 0 14 14" style="left:568px;top:312px"><use href="#i-clock"/></svg>
<div class="t" style="left:585px;top:311px">Core <span class="hs">#</span>4 Thermal Throttling</div>
<div class="t r" style="left:790px;width:74px;top:311px">No</div>
<div class="t r" style="left:870px;width:74px;top:311px">No</div>
<div class="t r" style="left:950px;width:74px;top:311px">No</div>
<svg class="ic" width="14" height="14" viewBox="0 0 14 14" style="left:568px;top:329px"><use href="#i-clock"/></svg>
<div class="t" style="left:585px;top:328px">Core <span class="hs">#</span>5 Thermal Throttling</div>
<div class="t r" style="left:790px;width:74px;top:328px">No</div>
<div class="t r" style="left:870px;width:74px;top:328px">No</div>
<div class="t r" style="left:950px;width:74px;top:328px">No</div>
<div class="bg str" style="left:583px;top:345px;width:207px"></div>
<div class="bg str" style="left:791px;top:345px;width:79px"></div>
<div class="bg str" style="left:871px;top:345px;width:79px"></div>
<div class="bg str" style="left:951px;top:345px;width:79px"></div>
<div class="bg str" style="left:1031px;top:345px;width:79px"></div>
<svg class="ic" width="14" height="14" viewBox="0 0 14 14" style="left:568px;top:346px"><use href="#i-clock"/></svg>
<div class="t" style="left:585px;top:345px">Core <span class="hs">#</span>0 Critical Temperature</div>
<div class="t r" style="left:790px;width:74px;top:345px">No</div>
<div class="t r" style="left:870px;width:74px;top:345px">No</div>
<div class="t r" style="left:950px;width:74px;top:345px">No</div>
<svg class="ic" width="14" height="14" viewBox="0 0 14 14" style="left:568px;top:363px"><use href="#i-clock"/></svg>
<div class="t" style="left:585px;top:362px">Core <span class="hs">#</span>1 Critical Temperature</div>
<div class="t r" style="left:790px;width:74px;top:362px">No</div>
<div class="t r" style="left:870px;width:74px;top:362px">No</div>
<div class="t r" style="left:950px;width:74px;top:362px">No</div>
<div class="bg str" style="left:583px;top:379px;width:207px"></div>
<div class="bg str" style="left:791px;top:379px;width:79px"></div>
<div class="bg str" style="left:871px;top:379px;width:79px"></div>
<div class="bg str" style="left:951px;top:379px;width:79px"></div>
<div class="bg str" style="left:1031px;top:379px;width:79px"></div>
<svg class="ic" width="14" height="14" viewBox="0 0 14 14" style="left:568px;top:380px"><use href="#i-clock"/></svg>
<div class="t" style="left:585px;top:379px">Core <span class="hs">#</span>2 Critical Temperature</div>
<div class="t r" style="left:790px;width:74px;top:379px">No</div>
<div class="t r" style="left:870px;width:74px;top:379px">No</div>
<div class="t r" style="left:950px;width:74px;top:379px">No</div>
<svg class="ic" width="14" height="14" viewBox="0 0 14 14" style="left:568px;top:397px"><use href="#i-clock"/></svg>
<div class="t" style="left:585px;top:396px">Core <span class="hs">#</span>3 Critical Temperature</div>
<div class="t r" style="left:790px;width:74px;top:396px">No</div>
<div class="t r" style="left:870px;width:74px;top:396px">No</div>
<div class="t r" style="left:950px;width:74px;top:396px">No</div>
<div class="bg str" style="left:583px;top:413px;width:207px"></div>
<div class="bg str" style="left:791px;top:413px;width:79px"></div>
<div class="bg str" style="left:871px;top:413px;width:79px"></div>
<div class="bg str" style="left:951px;top:413px;width:79px"></div>
<div class="bg str" style="left:1031px;top:413px;width:79px"></div>
<svg class="ic" width="14" height="14" viewBox="0 0 14 14" style="left:568px;top:414px"><use href="#i-clock"/></svg>
<div class="t" style="left:585px;top:413px">Core <span class="hs">#</span>4 Critical Temperature</div>
<div class="t r" style="left:790px;width:74px;top:413px">No</div>
<div class="t r" style="left:870px;width:74px;top:413px">No</div>
<div class="t r" style="left:950px;width:74px;top:413px">No</div>
<svg class="ic" width="14" height="14" viewBox="0 0 14 14" style="left:568px;top:431px"><use href="#i-clock"/></svg>
<div class="t" style="left:585px;top:430px">Core <span class="hs">#</span>5 Critical Temperature</div>
<div class="t r" style="left:790px;width:74px;top:430px">No</div>
<div class="t r" style="left:870px;width:74px;top:430px">No</div>
<div class="t r" style="left:950px;width:74px;top:430px">No</div>
<div class="bg str" style="left:583px;top:447px;width:207px"></div>
<div class="bg str" style="left:791px;top:447px;width:79px"></div>
<div class="bg str" style="left:871px;top:447px;width:79px"></div>
<div class="bg str" style="left:951px;top:447px;width:79px"></div>
<div class="bg str" style="left:1031px;top:447px;width:79px"></div>
<svg class="ic" width="14" height="14" viewBox="0 0 14 14" style="left:568px;top:448px"><use href="#i-clock"/></svg>
<div class="t" style="left:585px;top:447px">Core <span class="hs">#</span>0 Power Limit Exceeded</div>
<div class="t r" style="left:790px;width:74px;top:447px">No</div>
<div class="t r" style="left:870px;width:74px;top:447px">No</div>
<div class="t r" style="left:950px;width:74px;top:447px">No</div>
<svg class="ic" width="14" height="14" viewBox="0 0 14 14" style="left:568px;top:465px"><use href="#i-clock"/></svg>
<div class="t" style="left:585px;top:464px">Core <span class="hs">#</span>1 Power Limit Exceeded</div>
<div class="t r" style="left:790px;width:74px;top:464px">No</div>
<div class="t r" style="left:870px;width:74px;top:464px">No</div>
<div class="t r" style="left:950px;width:74px;top:464px">No</div>
<div class="bg str" style="left:583px;top:481px;width:207px"></div>
<div class="bg str" style="left:791px;top:481px;width:79px"></div>
<div class="bg str" style="left:871px;top:481px;width:79px"></div>
<div class="bg str" style="left:951px;top:481px;width:79px"></div>
<div class="bg str" style="left:1031px;top:481px;width:79px"></div>
<svg class="ic" width="14" height="14" viewBox="0 0 14 14" style="left:568px;top:482px"><use href="#i-clock"/></svg>
<div class="t" style="left:585px;top:481px">Core <span class="hs">#</span>2 Power Limit Exceeded</div>
<div class="t r" style="left:790px;width:74px;top:481px">No</div>
<div class="t r" style="left:870px;width:74px;top:481px">No</div>
<div class="t r" style="left:950px;width:74px;top:481px">No</div>
<svg class="ic" width="14" height="14" viewBox="0 0 14 14" style="left:568px;top:499px"><use href="#i-clock"/></svg>
<div class="t" style="left:585px;top:498px">Core <span class="hs">#</span>3 Power Limit Exceeded</div>
<div class="t r" style="left:790px;width:74px;top:498px">No</div>
<div class="t r" style="left:870px;width:74px;top:498px">No</div>
<div class="t r" style="left:950px;width:74px;top:498px">No</div>
<div class="bg str" style="left:583px;top:515px;width:207px"></div>
<div class="bg str" style="left:791px;top:515px;width:79px"></div>
<div class="bg str" style="left:871px;top:515px;width:79px"></div>
<div class="bg str" style="left:951px;top:515px;width:79px"></div>
<div class="bg str" style="left:1031px;top:515px;width:79px"></div>
<svg class="ic" width="14" height="14" viewBox="0 0 14 14" style="left:568px;top:516px"><use href="#i-clock"/></svg>
<div class="t" style="left:585px;top:515px">Core <span class="hs">#</span>4 Power Limit Exceeded</div>
<div class="t r" style="left:790px;width:74px;top:515px">No</div>
<div class="t r" style="left:870px;width:74px;top:515px">No</div>
<div class="t r" style="left:950px;width:74px;top:515px">No</div>
<svg class="ic" width="14" height="14" viewBox="0 0 14 14" style="left:568px;top:533px"><use href="#i-clock"/></svg>
<div class="t" style="left:585px;top:532px">Core <span class="hs">#</span>5 Power Limit Exceeded</div>
<div class="t r" style="left:790px;width:74px;top:532px">No</div>
<div class="t r" style="left:870px;width:74px;top:532px">No</div>
<div class="t r" style="left:950px;width:74px;top:532px">No</div>
<div class="bg str" style="left:583px;top:549px;width:207px"></div>
<div class="bg str" style="left:791px;top:549px;width:79px"></div>
<div class="bg str" style="left:871px;top:549px;width:79px"></div>
<div class="bg str" style="left:951px;top:549px;width:79px"></div>
<div class="bg str" style="left:1031px;top:549px;width:79px"></div>
<svg class="ic" width="14" height="14" viewBox="0 0 14 14" style="left:568px;top:550px"><use href="#i-clock"/></svg>
<div class="t" style="left:585px;top:549px">Package/Ring Thermal Throttling</div>
<div class="t r" style="left:790px;width:74px;top:549px">No</div>
<div class="t r" style="left:870px;width:74px;top:549px">No</div>
<div class="t r" style="left:950px;width:74px;top:549px">No</div>
<svg class="ic" width="14" height="14" viewBox="0 0 14 14" style="left:568px;top:567px"><use href="#i-clock"/></svg>
<div class="t" style="left:585px;top:566px">Package/Ring Critical Temperature</div>
<div class="t r" style="left:790px;width:74px;top:566px">No</div>
<div class="t r" style="left:870px;width:74px;top:566px">No</div>
<div class="t r" style="left:950px;width:74px;top:566px">No</div>
<div class="bg str" style="left:583px;top:583px;width:207px"></div>
<div class="bg str" style="left:791px;top:583px;width:79px"></div>
<div class="bg str" style="left:871px;top:583px;width:79px"></div>
<div class="bg str" style="left:951px;top:583px;width:79px"></div>
<div class="bg str" style="left:1031px;top:583px;width:79px"></div>
<svg class="ic" width="14" height="14" viewBox="0 0 14 14" style="left:568px;top:584px"><use href="#i-clock"/></svg>
<div class="t" style="left:585px;top:583px">Package/Ring Power Limit Exceeded</div>
<div class="t r" style="left:790px;width:74px;top:583px">No</div>
<div class="t r" style="left:870px;width:74px;top:583px">No</div>
<div class="t r" style="left:950px;width:74px;top:583px">No</div>
<div class="bg grp" style="left:583px;top:617px;width:207px"></div>
<div class="bg grp" style="left:791px;top:617px;width:79px"></div>
<div class="bg grp" style="left:871px;top:617px;width:79px"></div>
<div class="bg grp" style="left:951px;top:617px;width:79px"></div>
<div class="bg grp" style="left:1031px;top:617px;width:79px"></div>
<svg class="ic" width="14" height="16" viewBox="0 0 14 16" style="left:568px;top:617px"><use href="#i-chip"/></svg>
<div class="t it" style="left:585.5px;top:617px;transform:scaleX(1.0)">CPU [#0]: Intel Core i7-3930K</div>
<svg class="ic" width="9" height="17" viewBox="0 0 9 17" style="left:570px;top:634px"><use href="#i-temp"/></svg>
<div class="t" style="left:585px;top:634px">Memory Ambient</div>
<div class="t r" style="left:790px;width:74px;top:634px">50 °C</div>
<div class="t r" style="left:870px;width:74px;top:634px">50 °C</div>
<div class="t r" style="left:950px;width:74px;top:634px">50 °C</div>
<div class="t r" style="left:1030px;width:74px;top:634px">50 °C</div>
<div class="bg str" style="left:583px;top:651px;width:207px"></div>
<div class="bg str" style="left:791px;top:651px;width:79px"></div>
<div class="bg str" style="left:871px;top:651px;width:79px"></div>
<div class="bg str" style="left:951px;top:651px;width:79px"></div>
<div class="bg str" style="left:1031px;top:651px;width:79px"></div>
<svg class="ic" width="9" height="17" viewBox="0 0 9 17" style="left:570px;top:651px"><use href="#i-temp"/></svg>
<div class="t" style="left:585px;top:651px">CPU Package</div>
<div class="t r" style="left:790px;width:74px;top:651px">37 °C</div>
<div class="t r" style="left:870px;width:74px;top:651px">37 °C</div>
<div class="t r" style="left:950px;width:74px;top:651px">60 °C</div>
<div class="t r" style="left:1030px;width:74px;top:651px">48 °C</div>
<svg class="ic" width="9" height="17" viewBox="0 0 9 17" style="left:570px;top:668px"><use href="#i-temp"/></svg>
<div class="t" style="left:585px;top:668px">PP0</div>
<div class="t r" style="left:790px;width:74px;top:668px">37 °C</div>
<div class="t r" style="left:870px;width:74px;top:668px">37 °C</div>
<div class="t r" style="left:950px;width:74px;top:668px">60 °C</div>
<div class="t r" style="left:1030px;width:74px;top:668px">48 °C</div>
<div class="bg str" style="left:583px;top:685px;width:207px"></div>
<div class="bg str" style="left:791px;top:685px;width:79px"></div>
<div class="bg str" style="left:871px;top:685px;width:79px"></div>
<div class="bg str" style="left:951px;top:685px;width:79px"></div>
<div class="bg str" style="left:1031px;top:685px;width:79px"></div>
<svg class="ic" width="10" height="17" viewBox="0 0 10 17" style="left:570px;top:685px"><use href="#i-volt"/></svg>
<div class="t" style="left:585px;top:685px">CPU Package Power</div>
<div class="t r" style="left:790px;width:74px;top:685px">66.541 W</div>
<div class="t r" style="left:870px;width:74px;top:685px">66.201 W</div>
<div class="t r" style="left:950px;width:74px;top:685px">188.533 W</div>
<div class="t r" style="left:1030px;width:74px;top:685px">119.067 W</div>
<svg class="ic" width="10" height="17" viewBox="0 0 10 17" style="left:570px;top:702px"><use href="#i-volt"/></svg>
<div class="t" style="left:585px;top:702px">IA Cores Power</div>
<div class="t r" style="left:790px;width:74px;top:702px">50.355 W</div>
<div class="t r" style="left:870px;width:74px;top:702px">50.009 W</div>
<div class="t r" style="left:950px;width:74px;top:702px">168.664 W</div>
<div class="t r" style="left:1030px;width:74px;top:702px">101.555 W</div>
<div class="bg str" style="left:583px;top:719px;width:207px"></div>
<div class="bg str" style="left:791px;top:719px;width:79px"></div>
<div class="bg str" style="left:871px;top:719px;width:79px"></div>
<div class="bg str" style="left:951px;top:719px;width:79px"></div>
<div class="bg str" style="left:1031px;top:719px;width:79px"></div>
<div class="bg grp" style="left:583px;top:736px;width:207px"></div>
<div class="bg grp" style="left:791px;top:736px;width:79px"></div>
<div class="bg grp" style="left:871px;top:736px;width:79px"></div>
<div class="bg grp" style="left:951px;top:736px;width:79px"></div>
<div class="bg grp" style="left:1031px;top:736px;width:79px"></div>
<svg class="ic" width="14" height="16" viewBox="0 0 14 16" style="left:568px;top:736px"><use href="#i-chip"/></svg>
<div class="t it" style="left:585.5px;top:736px;transform:scaleX(1.0)">CPU [#0]: Intel Core i7-3930K: C-State ...</div>
<div class="bg str" style="left:583px;top:753px;width:207px"></div>
<div class="bg str" style="left:791px;top:753px;width:79px"></div>
<div class="bg str" style="left:871px;top:753px;width:79px"></div>
<div class="bg str" style="left:951px;top:753px;width:79px"></div>
<div class="bg str" style="left:1031px;top:753px;width:79px"></div>
<svg class="ic" width="14" height="14" viewBox="0 0 14 14" style="left:568px;top:754px"><use href="#i-clock"/></svg>
<div class="t" style="left:585px;top:753px">Core <span class="hs">#</span>0 Thread 0 C0 Residency</div>
<div class="t r" style="left:790px;width:74px;top:753px">2.7 %</div>
<div class="t r" style="left:870px;width:74px;top:753px">1.0 %</div>
<div class="t r" style="left:950px;width:74px;top:753px">100.0 %</div>
<div class="t r" style="left:1030px;width:74px;top:753px">54.9 %</div>
<svg class="ic" width="14" height="14" viewBox="0 0 14 14" style="left:568px;top:771px"><use href="#i-clock"/></svg>
<div class="t" style="left:585px;top:770px">Core <span class="hs">#</span>0 Thread 1 C0 Residency</div>
<div class="t r" style="left:790px;width:74px;top:770px">1.4 %</div>
<div class="t r" style="left:870px;width:74px;top:770px">0.6 %</div>
<div class="t r" style="left:950px;width:74px;top:770px">100.0 %</div>
<div class="t r" style="left:1030px;width:74px;top:770px">54.8 %</div>
<div class="bg str" style="left:583px;top:787px;width:207px"></div>
<div class="bg str" style="left:791px;top:787px;width:79px"></div>
<div class="bg str" style="left:871px;top:787px;width:79px"></div>
<div class="bg str" style="left:951px;top:787px;width:79px"></div>
<div class="bg str" style="left:1031px;top:787px;width:79px"></div>
<svg class="ic" width="14" height="14" viewBox="0 0 14 14" style="left:568px;top:788px"><use href="#i-clock"/></svg>
<div class="t" style="left:585px;top:787px">Core <span class="hs">#</span>1 Thread 0 C0 Residency</div>
<div class="t r" style="left:790px;width:74px;top:787px">3.9 %</div>
<div class="t r" style="left:870px;width:74px;top:787px">1.4 %</div>
<div class="t r" style="left:950px;width:74px;top:787px">100.0 %</div>
<div class="t r" style="left:1030px;width:74px;top:787px">56.2 %</div>
<svg class="ic" width="14" height="14" viewBox="0 0 14 14" style="left:568px;top:805px"><use href="#i-clock"/></svg>
<div class="t" style="left:585px;top:804px">Core <span class="hs">#</span>1 Thread 1 C0 Residency</div>
<div class="t r" style="left:790px;width:74px;top:804px">0.5 %</div>
<div class="t r" style="left:870px;width:74px;top:804px">0.2 %</div>
<div class="t r" style="left:950px;width:74px;top:804px">100.0 %</div>
<div class="t r" style="left:1030px;width:74px;top:804px">54.5 %</div>
<div class="bg str" style="left:583px;top:821px;width:207px"></div>
<div class="bg str" style="left:791px;top:821px;width:79px"></div>
<div class="bg str" style="left:871px;top:821px;width:79px"></div>
<div class="bg str" style="left:951px;top:821px;width:79px"></div>
<div class="bg str" style="left:1031px;top:821px;width:79px"></div>
<svg class="ic" width="14" height="14" viewBox="0 0 14 14" style="left:568px;top:822px"><use href="#i-clock"/></svg>
<div class="t" style="left:585px;top:821px">Core <span class="hs">#</span>2 Thread 0 C0 Residency</div>
<div class="t r" style="left:790px;width:74px;top:821px">1.1 %</div>
<div class="t r" style="left:870px;width:74px;top:821px">0.7 %</div>
<div class="t r" style="left:950px;width:74px;top:821px">100.0 %</div>
<div class="t r" style="left:1030px;width:74px;top:821px">54.3 %</div>
<svg class="ic" width="14" height="14" viewBox="0 0 14 14" style="left:568px;top:839px"><use href="#i-clock"/></svg>
<div class="t" style="left:585px;top:838px">Core <span class="hs">#</span>2 Thread 1 C0 Residency</div>
<div class="t r" style="left:790px;width:74px;top:838px">1.9 %</div>
<div class="t r" style="left:870px;width:74px;top:838px">0.6 %</div>
<div class="t r" style="left:950px;width:74px;top:838px">100.0 %</div>
<div class="t r" style="left:1030px;width:74px;top:838px">54.9 %</div>
<div class="bg str" style="left:583px;top:855px;width:207px"></div>
<div class="bg str" style="left:791px;top:855px;width:79px"></div>
<div class="bg str" style="left:871px;top:855px;width:79px"></div>
<div class="bg str" style="left:951px;top:855px;width:79px"></div>
<div class="bg str" style="left:1031px;top:855px;width:79px"></div>
<svg class="ic" width="14" height="14" viewBox="0 0 14 14" style="left:568px;top:856px"><use href="#i-clock"/></svg>
<div class="t" style="left:585px;top:855px">Core <span class="hs">#</span>3 Thread 0 C0 Residency</div>
<div class="t r" style="left:790px;width:74px;top:855px">1.3 %</div>
<div class="t r" style="left:870px;width:74px;top:855px">0.7 %</div>
<div class="t r" style="left:950px;width:74px;top:855px">100.0 %</div>
<div class="t r" style="left:1030px;width:74px;top:855px">55.0 %</div>
<svg class="ic" width="14" height="14" viewBox="0 0 14 14" style="left:568px;top:873px"><use href="#i-clock"/></svg>
<div class="t" style="left:585px;top:872px">Core <span class="hs">#</span>3 Thread 1 C0 Residency</div>
<div class="t r" style="left:790px;width:74px;top:872px">3.6 %</div>
<div class="t r" style="left:870px;width:74px;top:872px">1.0 %</div>
<div class="t r" style="left:950px;width:74px;top:872px">100.0 %</div>
<div class="t r" style="left:1030px;width:74px;top:872px">57.0 %</div>
<div class="bg str" style="left:583px;top:889px;width:207px"></div>
<div class="bg str" style="left:791px;top:889px;width:79px"></div>
<div class="bg str" style="left:871px;top:889px;width:79px"></div>
<div class="bg str" style="left:951px;top:889px;width:79px"></div>
<div class="bg str" style="left:1031px;top:889px;width:79px"></div>
<svg class="ic" width="14" height="14" viewBox="0 0 14 14" style="left:568px;top:890px"><use href="#i-clock"/></svg>
<div class="t" style="left:585px;top:889px">Core <span class="hs">#</span>4 Thread 0 C0 Residency</div>
<div class="t r" style="left:790px;width:74px;top:889px">0.7 %</div>
<div class="t r" style="left:870px;width:74px;top:889px">0.4 %</div>
<div class="t r" style="left:950px;width:74px;top:889px">100.0 %</div>
<div class="t r" style="left:1030px;width:74px;top:889px">51.9 %</div>
<svg class="ic" width="14" height="14" viewBox="0 0 14 14" style="left:568px;top:907px"><use href="#i-clock"/></svg>
<div class="t" style="left:585px;top:906px">Core <span class="hs">#</span>4 Thread 1 C0 Residency</div>
<div class="t r" style="left:790px;width:74px;top:906px">1.4 %</div>
<div class="t r" style="left:870px;width:74px;top:906px">0.6 %</div>
<div class="t r" style="left:950px;width:74px;top:906px">100.0 %</div>
<div class="t r" style="left:1030px;width:74px;top:906px">54.9 %</div>
<div class="hsep" style="left:1326px;height:24px"></div>
<div class="ht" style="left:1123px;top:38px">Sensor</div>
<div class="hsep" style="left:1406px;height:24px"></div>
<div class="ht r" style="left:1326px;width:74px;top:38px">Current</div>
<div class="hsep" style="left:1486px;height:24px"></div>
<div class="ht r" style="left:1406px;width:74px;top:38px">Minimum</div>
<div class="hsep" style="left:1566px;height:24px"></div>
<div class="ht r" style="left:1486px;width:74px;top:38px">Maximum</div>
<div class="hsep" style="left:1646px;height:24px"></div>
<div class="ht r" style="left:1566px;width:74px;top:38px">Average</div>
<div class="vg" style="left:1326px;top:56px"></div>
<div class="vg" style="left:1406px;top:56px"></div>
<div class="vg" style="left:1486px;top:56px"></div>
<div class="vg" style="left:1566px;top:56px"></div>
<div class="vg" style="left:1646px;top:56px"></div>
<div class="hg" style="left:1117px;width:530px;top:72px"></div>
<div class="hg" style="left:1117px;width:530px;top:89px"></div>
<div class="hg" style="left:1117px;width:530px;top:106px"></div>
<div class="hg" style="left:1117px;width:530px;top:123px"></div>
<div class="hg" style="left:1117px;width:530px;top:140px"></div>
<div class="hg" style="left:1117px;width:530px;top:157px"></div>
<div class="hg" style="left:1117px;width:530px;top:174px"></div>
<div class="hg" style="left:1117px;width:530px;top:191px"></div>
<div class="hg" style="left:1117px;width:530px;top:208px"></div>
<div class="hg" style="left:1117px;width:530px;top:225px"></div>
<div class="hg" style="left:1117px;width:530px;top:242px"></div>
<div class="hg" style="left:1117px;width:530px;top:259px"></div>
<div class="hg" style="left:1117px;width:530px;top:276px"></div>
<div class="hg" style="left:1117px;width:530px;top:293px"></div>
<div class="hg" style="left:1117px;width:530px;top:310px"></div>
<div class="hg" style="left:1117px;width:530px;top:327px"></div>
<div class="hg" style="left:1117px;width:530px;top:344px"></div>
<div class="hg" style="left:1117px;width:530px;top:361px"></div>
<div class="hg" style="left:1117px;width:530px;top:378px"></div>
<div class="hg" style="left:1117px;width:530px;top:395px"></div>
<div class="hg" style="left:1117px;width:530px;top:412px"></div>
<div class="hg" style="left:1117px;width:530px;top:429px"></div>
<div class="hg" style="left:1117px;width:530px;top:446px"></div>
<div class="hg" style="left:1117px;width:530px;top:463px"></div>
<div class="hg" style="left:1117px;width:530px;top:480px"></div>
<div class="hg" style="left:1117px;width:530px;top:497px"></div>
<div class="hg" style="left:1117px;width:530px;top:514px"></div>
<div class="hg" style="left:1117px;width:530px;top:531px"></div>
<div class="hg" style="left:1117px;width:530px;top:548px"></div>
<div class="hg" style="left:1117px;width:530px;top:565px"></div>
<div class="hg" style="left:1117px;width:530px;top:582px"></div>
<div class="hg" style="left:1117px;width:530px;top:599px"></div>
<div class="hg" style="left:1117px;width:530px;top:616px"></div>
<div class="hg" style="left:1117px;width:530px;top:633px"></div>
<div class="hg" style="left:1117px;width:530px;top:650px"></div>
<div class="hg" style="left:1117px;width:530px;top:667px"></div>
<div class="hg" style="left:1117px;width:530px;top:684px"></div>
<div class="hg" style="left:1117px;width:530px;top:701px"></div>
<div class="hg" style="left:1117px;width:530px;top:718px"></div>
<div class="hg" style="left:1117px;width:530px;top:735px"></div>
<div class="hg" style="left:1117px;width:530px;top:752px"></div>
<div class="hg" style="left:1117px;width:530px;top:769px"></div>
<div class="hg" style="left:1117px;width:530px;top:786px"></div>
<div class="hg" style="left:1117px;width:530px;top:803px"></div>
<div class="hg" style="left:1117px;width:530px;top:820px"></div>
<div class="hg" style="left:1117px;width:530px;top:837px"></div>
<div class="hg" style="left:1117px;width:530px;top:854px"></div>
<div class="hg" style="left:1117px;width:530px;top:871px"></div>
<div class="hg" style="left:1117px;width:530px;top:888px"></div>
<div class="hg" style="left:1117px;width:530px;top:905px"></div>
<div class="hg" style="left:1117px;width:530px;top:922px"></div>
<div class="hg" style="left:1117px;width:530px;top:939px"></div>
<svg class="ic" width="14" height="14" viewBox="0 0 14 14" style="left:1122px;top:57px"><use href="#i-clock"/></svg>
<div class="t" style="left:1139px;top:56px">Core <span class="hs">#</span>5 Thread 0 C0 Residency</div>
<div class="t r" style="left:1326px;width:74px;top:56px">1.3 %</div>
<div class="t r" style="left:1406px;width:74px;top:56px">0.9 %</div>
<div class="t r" style="left:1486px;width:74px;top:56px">100.0 %</div>
<div class="t r" style="left:1566px;width:74px;top:56px">55.7 %</div>
<div class="bg str" style="left:1137px;top:73px;width:189px"></div>
<div class="bg str" style="left:1327px;top:73px;width:79px"></div>
<div class="bg str" style="left:1407px;top:73px;width:79px"></div>
<div class="bg str" style="left:1487px;top:73px;width:79px"></div>
<div class="bg str" style="left:1567px;top:73px;width:79px"></div>
<svg class="ic" width="14" height="14" viewBox="0 0 14 14" style="left:1122px;top:74px"><use href="#i-clock"/></svg>
<div class="t" style="left:1139px;top:73px">Core <span class="hs">#</span>5 Thread 1 C0 Residency</div>
<div class="t r" style="left:1326px;width:74px;top:73px">0.4 %</div>
<div class="t r" style="left:1406px;width:74px;top:73px">0.3 %</div>
<div class="t r" style="left:1486px;width:74px;top:73px">100.0 %</div>
<div class="t r" style="left:1566px;width:74px;top:73px">54.7 %</div>
<div class="bg grp" style="left:1137px;top:107px;width:189px"></div>
<div class="bg grp" style="left:1327px;top:107px;width:79px"></div>
<div class="bg grp" style="left:1407px;top:107px;width:79px"></div>
<div class="bg grp" style="left:1487px;top:107px;width:79px"></div>
<div class="bg grp" style="left:1567px;top:107px;width:79px"></div>
<svg class="ic" width="14" height="16" viewBox="0 0 14 16" style="left:1122px;top:107px"><use href="#i-chip"/></svg>
<div class="t it" style="left:1139.5px;top:107px;transform:scaleX(0.936)">Memory Timings</div>
<svg class="ic" width="14" height="14" viewBox="0 0 14 14" style="left:1122px;top:125px"><use href="#i-clock"/></svg>
<div class="t" style="left:1139px;top:124px">Memory Clock</div>
<div class="t r" style="left:1326px;width:74px;top:124px">800.0 MHz</div>
<div class="t r" style="left:1406px;width:74px;top:124px">799.9 MHz</div>
<div class="t r" style="left:1486px;width:74px;top:124px">800.1 MHz</div>
<div class="t r" style="left:1566px;width:74px;top:124px">800.0 MHz</div>
<div class="bg str" style="left:1137px;top:141px;width:189px"></div>
<div class="bg str" style="left:1327px;top:141px;width:79px"></div>
<div class="bg str" style="left:1407px;top:141px;width:79px"></div>
<div class="bg str" style="left:1487px;top:141px;width:79px"></div>
<div class="bg str" style="left:1567px;top:141px;width:79px"></div>
<svg class="ic" width="14" height="14" viewBox="0 0 14 14" style="left:1122px;top:142px"><use href="#i-clock"/></svg>
<div class="t" style="left:1139px;top:141px">Memory Clock Ratio</div>
<div class="t r" style="left:1326px;width:74px;top:141px">12.00 x</div>
<div class="t r" style="left:1406px;width:74px;top:141px">12.00 x</div>
<div class="t r" style="left:1486px;width:74px;top:141px">12.00 x</div>
<div class="t r" style="left:1566px;width:74px;top:141px">12.00 x</div>
<svg class="ic" width="14" height="14" viewBox="0 0 14 14" style="left:1122px;top:159px"><use href="#i-clock"/></svg>
<div class="t" style="left:1139px;top:158px">Tcas</div>
<div class="t r" style="left:1326px;width:74px;top:158px">9 T</div>
<div class="t r" style="left:1406px;width:74px;top:158px">9 T</div>
<div class="t r" style="left:1486px;width:74px;top:158px">9 T</div>
<div class="bg str" style="left:1137px;top:175px;width:189px"></div>
<div class="bg str" style="left:1327px;top:175px;width:79px"></div>
<div class="bg str" style="left:1407px;top:175px;width:79px"></div>
<div class="bg str" style="left:1487px;top:175px;width:79px"></div>
<div class="bg str" style="left:1567px;top:175px;width:79px"></div>
<svg class="ic" width="14" height="14" viewBox="0 0 14 14" style="left:1122px;top:176px"><use href="#i-clock"/></svg>
<div class="t" style="left:1139px;top:175px">Trcd</div>
<div class="t r" style="left:1326px;width:74px;top:175px">9 T</div>
<div class="t r" style="left:1406px;width:74px;top:175px">9 T</div>
<div class="t r" style="left:1486px;width:74px;top:175px">9 T</div>
<svg class="ic" width="14" height="14" viewBox="0 0 14 14" style="left:1122px;top:193px"><use href="#i-clock"/></svg>
<div class="t" style="left:1139px;top:192px">Trp</div>
<div class="t r" style="left:1326px;width:74px;top:192px">9 T</div>
<div class="t r" style="left:1406px;width:74px;top:192px">9 T</div>
<div class="t r" style="left:1486px;width:74px;top:192px">9 T</div>
<div class="bg str" style="left:1137px;top:209px;width:189px"></div>
<div class="bg str" style="left:1327px;top:209px;width:79px"></div>
<div class="bg str" style="left:1407px;top:209px;width:79px"></div>
<div class="bg str" style="left:1487px;top:209px;width:79px"></div>
<div class="bg str" style="left:1567px;top:209px;width:79px"></div>
<svg class="ic" width="14" height="14" viewBox="0 0 14 14" style="left:1122px;top:210px"><use href="#i-clock"/></svg>
<div class="t" style="left:1139px;top:209px">Tras</div>
<div class="t r" style="left:1326px;width:74px;top:209px">27 T</div>
<div class="t r" style="left:1406px;width:74px;top:209px">27 T</div>
<div class="t r" style="left:1486px;width:74px;top:209px">27 T</div>
<svg class="ic" width="14" height="14" viewBox="0 0 14 14" style="left:1122px;top:227px"><use href="#i-clock"/></svg>
<div class="t" style="left:1139px;top:226px">Trfc</div>
<div class="t r" style="left:1326px;width:74px;top:226px">208 T</div>
<div class="t r" style="left:1406px;width:74px;top:226px">208 T</div>
<div class="t r" style="left:1486px;width:74px;top:226px">208 T</div>
<div class="bg str" style="left:1137px;top:243px;width:189px"></div>
<div class="bg str" style="left:1327px;top:243px;width:79px"></div>
<div class="bg str" style="left:1407px;top:243px;width:79px"></div>
<div class="bg str" style="left:1487px;top:243px;width:79px"></div>
<div class="bg str" style="left:1567px;top:243px;width:79px"></div>
<svg class="ic" width="14" height="14" viewBox="0 0 14 14" style="left:1122px;top:244px"><use href="#i-clock"/></svg>
<div class="t" style="left:1139px;top:243px">Command Rate</div>
<div class="t r" style="left:1326px;width:74px;top:243px">1 T</div>
<div class="t r" style="left:1406px;width:74px;top:243px">1 T</div>
<div class="t r" style="left:1486px;width:74px;top:243px">1 T</div>
<div class="bg grp" style="left:1137px;top:277px;width:189px"></div>
<div class="bg grp" style="left:1327px;top:277px;width:79px"></div>
<div class="bg grp" style="left:1407px;top:277px;width:79px"></div>
<div class="bg grp" style="left:1487px;top:277px;width:79px"></div>
<div class="bg grp" style="left:1567px;top:277px;width:79px"></div>
<svg class="ic" width="14" height="16" viewBox="0 0 14 16" style="left:1122px;top:277px"><use href="#i-chip"/></svg>
<div class="t it" style="left:1139.5px;top:277px;transform:scaleX(0.932)">ASUS SABERTOOTH X79 (Nuvoton ...</div>
<svg class="ic" width="9" height="17" viewBox="0 0 9 17" style="left:1124px;top:294px"><use href="#i-temp"/></svg>
<div class="t" style="left:1139px;top:294px">Motherboard</div>
<div class="t r" style="left:1326px;width:74px;top:294px">42.0 °C</div>
<div class="t r" style="left:1406px;width:74px;top:294px">42.0 °C</div>
<div class="t r" style="left:1486px;width:74px;top:294px">42.0 °C</div>
<div class="t r" style="left:1566px;width:74px;top:294px">42.0 °C</div>
<div class="bg str" style="left:1137px;top:311px;width:189px"></div>
<div class="bg str" style="left:1327px;top:311px;width:79px"></div>
<div class="bg str" style="left:1407px;top:311px;width:79px"></div>
<div class="bg str" style="left:1487px;top:311px;width:79px"></div>
<div class="bg str" style="left:1567px;top:311px;width:79px"></div>
<svg class="ic" width="9" height="17" viewBox="0 0 9 17" style="left:1124px;top:311px"><use href="#i-temp"/></svg>
<div class="t" style="left:1139px;top:311px">SYSTIN1</div>
<div class="t r" style="left:1326px;width:74px;top:311px">42.5 °C</div>
<div class="t r" style="left:1406px;width:74px;top:311px">42.0 °C</div>
<div class="t r" style="left:1486px;width:74px;top:311px">42.5 °C</div>
<div class="t r" style="left:1566px;width:74px;top:311px">42.3 °C</div>
<svg class="ic" width="9" height="17" viewBox="0 0 9 17" style="left:1124px;top:328px"><use href="#i-temp"/></svg>
<div class="t" style="left:1139px;top:328px">SYSTIN2</div>
<div class="t r" style="left:1326px;width:74px;top:328px">42.5 °C</div>
<div class="t r" style="left:1406px;width:74px;top:328px">42.0 °C</div>
<div class="t r" style="left:1486px;width:74px;top:328px">42.5 °C</div>
<div class="t r" style="left:1566px;width:74px;top:328px">42.3 °C</div>
<div class="bg str" style="left:1137px;top:345px;width:189px"></div>
<div class="bg str" style="left:1327px;top:345px;width:79px"></div>
<div class="bg str" style="left:1407px;top:345px;width:79px"></div>
<div class="bg str" style="left:1487px;top:345px;width:79px"></div>
<div class="bg str" style="left:1567px;top:345px;width:79px"></div>
<svg class="ic" width="9" height="17" viewBox="0 0 9 17" style="left:1124px;top:345px"><use href="#i-temp"/></svg>
<div class="t" style="left:1139px;top:345px">SYSTIN3</div>
<div class="t r" style="left:1326px;width:74px;top:345px">42.5 °C</div>
<div class="t r" style="left:1406px;width:74px;top:345px">42.0 °C</div>
<div class="t r" style="left:1486px;width:74px;top:345px">42.5 °C</div>
<div class="t r" style="left:1566px;width:74px;top:345px">42.3 °C</div>
<svg class="ic" width="9" height="17" viewBox="0 0 9 17" style="left:1124px;top:362px"><use href="#i-temp"/></svg>
<div class="t" style="left:1139px;top:362px">CPU</div>
<div class="t r" style="left:1326px;width:74px;top:362px">27.0 °C</div>
<div class="t r" style="left:1406px;width:74px;top:362px">27.0 °C</div>
<div class="t r" style="left:1486px;width:74px;top:362px">48.0 °C</div>
<div class="t r" style="left:1566px;width:74px;top:362px">36.1 °C</div>
<div class="bg str" style="left:1137px;top:379px;width:189px"></div>
<div class="bg str" style="left:1327px;top:379px;width:79px"></div>
<div class="bg str" style="left:1407px;top:379px;width:79px"></div>
<div class="bg str" style="left:1487px;top:379px;width:79px"></div>
<div class="bg str" style="left:1567px;top:379px;width:79px"></div>
<svg class="ic" width="10" height="17" viewBox="0 0 10 17" style="left:1124px;top:379px"><use href="#i-volt"/></svg>
<div class="t" style="left:1139px;top:379px">Vcore</div>
<div class="t r" style="left:1326px;width:74px;top:379px">1.160 V</div>
<div class="t r" style="left:1406px;width:74px;top:379px">1.144 V</div>
<div class="t r" style="left:1486px;width:74px;top:379px">1.160 V</div>
<div class="t r" style="left:1566px;width:74px;top:379px">1.152 V</div>
<svg class="ic" width="10" height="17" viewBox="0 0 10 17" style="left:1124px;top:396px"><use href="#i-volt"/></svg>
<div class="t" style="left:1139px;top:396px">+12V</div>
<div class="t r" style="left:1326px;width:74px;top:396px">11.808 V</div>
<div class="t r" style="left:1406px;width:74px;top:396px">11.712 V</div>
<div class="t r" style="left:1486px;width:74px;top:396px">11.808 V</div>
<div class="t r" style="left:1566px;width:74px;top:396px">11.758 V</div>
<div class="bg str" style="left:1137px;top:413px;width:189px"></div>
<div class="bg str" style="left:1327px;top:413px;width:79px"></div>
<div class="bg str" style="left:1407px;top:413px;width:79px"></div>
<div class="bg str" style="left:1487px;top:413px;width:79px"></div>
<div class="bg str" style="left:1567px;top:413px;width:79px"></div>
<svg class="ic" width="10" height="17" viewBox="0 0 10 17" style="left:1124px;top:413px"><use href="#i-volt"/></svg>
<div class="t" style="left:1139px;top:413px">AVCC</div>
<div class="t r" style="left:1326px;width:74px;top:413px">3.328 V</div>
<div class="t r" style="left:1406px;width:74px;top:413px">3.280 V</div>
<div class="t r" style="left:1486px;width:74px;top:413px">3.328 V</div>
<div class="t r" style="left:1566px;width:74px;top:413px">3.309 V</div>
<svg class="ic" width="10" height="17" viewBox="0 0 10 17" style="left:1124px;top:430px"><use href="#i-volt"/></svg>
<div class="t" style="left:1139px;top:430px">+3.3V</div>
<div class="t r" style="left:1326px;width:74px;top:430px">3.328 V</div>
<div class="t r" style="left:1406px;width:74px;top:430px">3.280 V</div>
<div class="t r" style="left:1486px;width:74px;top:430px">3.328 V</div>
<div class="t r" style="left:1566px;width:74px;top:430px">3.305 V</div>
<div class="bg str" style="left:1137px;top:447px;width:189px"></div>
<div class="bg str" style="left:1327px;top:447px;width:79px"></div>
<div class="bg str" style="left:1407px;top:447px;width:79px"></div>
<div class="bg str" style="left:1487px;top:447px;width:79px"></div>
<div class="bg str" style="left:1567px;top:447px;width:79px"></div>
<svg class="ic" width="10" height="17" viewBox="0 0 10 17" style="left:1124px;top:447px"><use href="#i-volt"/></svg>
<div class="t" style="left:1139px;top:447px">+5V</div>
<div class="t r" style="left:1326px;width:74px;top:447px">5.040 V</div>
<div class="t r" style="left:1406px;width:74px;top:447px">4.960 V</div>
<div class="t r" style="left:1486px;width:74px;top:447px">5.040 V</div>
<div class="t r" style="left:1566px;width:74px;top:447px">5.022 V</div>
<svg class="ic" width="10" height="17" viewBox="0 0 10 17" style="left:1124px;top:464px"><use href="#i-volt"/></svg>
<div class="t" style="left:1139px;top:464px">VIN3</div>
<div class="t r" style="left:1326px;width:74px;top:464px">1.488 V</div>
<div class="t r" style="left:1406px;width:74px;top:464px">1.488 V</div>
<div class="t r" style="left:1486px;width:74px;top:464px">1.488 V</div>
<div class="t r" style="left:1566px;width:74px;top:464px">1.488 V</div>
<div class="bg str" style="left:1137px;top:481px;width:189px"></div>
<div class="bg str" style="left:1327px;top:481px;width:79px"></div>
<div class="bg str" style="left:1407px;top:481px;width:79px"></div>
<div class="bg str" style="left:1487px;top:481px;width:79px"></div>
<div class="bg str" style="left:1567px;top:481px;width:79px"></div>
<svg class="ic" width="10" height="17" viewBox="0 0 10 17" style="left:1124px;top:481px"><use href="#i-volt"/></svg>
<div class="t" style="left:1139px;top:481px">3VSB</div>
<div class="t r" style="left:1326px;width:74px;top:481px">3.408 V</div>
<div class="t r" style="left:1406px;width:74px;top:481px">3.408 V</div>
<div class="t r" style="left:1486px;width:74px;top:481px">3.408 V</div>
<div class="t r" style="left:1566px;width:74px;top:481px">3.408 V</div>
<svg class="ic" width="10" height="17" viewBox="0 0 10 17" style="left:1124px;top:498px"><use href="#i-volt"/></svg>
<div class="t" style="left:1139px;top:498px">VBAT</div>
<div class="t r" style="left:1326px;width:74px;top:498px">3.328 V</div>
<div class="t r" style="left:1406px;width:74px;top:498px">3.312 V</div>
<div class="t r" style="left:1486px;width:74px;top:498px">3.328 V</div>
<div class="t r" style="left:1566px;width:74px;top:498px">3.322 V</div>
<div class="bg str" style="left:1137px;top:515px;width:189px"></div>
<div class="bg str" style="left:1327px;top:515px;width:79px"></div>
<div class="bg str" style="left:1407px;top:515px;width:79px"></div>
<div class="bg str" style="left:1487px;top:515px;width:79px"></div>
<div class="bg str" style="left:1567px;top:515px;width:79px"></div>
<svg class="ic" width="14" height="14" viewBox="0 0 14 14" style="left:1122px;top:516px"><use href="#i-fan"/></svg>
<div class="t" style="left:1139px;top:515px">CPU</div>
<div class="t r" style="left:1326px;width:74px;top:515px">2,292 RPM</div>
<div class="t r" style="left:1406px;width:74px;top:515px">2,284 RPM</div>
<div class="t r" style="left:1486px;width:74px;top:515px">2,311 RPM</div>
<div class="t r" style="left:1566px;width:74px;top:515px">2,295 RPM</div>
<svg class="ic" width="14" height="14" viewBox="0 0 14 14" style="left:1122px;top:533px"><use href="#i-clock"/></svg>
<div class="t" style="left:1139px;top:532px">Chassis Intrusion</div>
<div class="t r" style="left:1326px;width:74px;top:532px">No</div>
<div class="t r" style="left:1406px;width:74px;top:532px">No</div>
<div class="t r" style="left:1486px;width:74px;top:532px">No</div>
<div class="bg str" style="left:1137px;top:549px;width:189px"></div>
<div class="bg str" style="left:1327px;top:549px;width:79px"></div>
<div class="bg str" style="left:1407px;top:549px;width:79px"></div>
<div class="bg str" style="left:1487px;top:549px;width:79px"></div>
<div class="bg str" style="left:1567px;top:549px;width:79px"></div>
<div class="bg grp" style="left:1137px;top:566px;width:189px"></div>
<div class="bg grp" style="left:1327px;top:566px;width:79px"></div>
<div class="bg grp" style="left:1407px;top:566px;width:79px"></div>
<div class="bg grp" style="left:1487px;top:566px;width:79px"></div>
<div class="bg grp" style="left:1567px;top:566px;width:79px"></div>
<svg class="ic" width="14" height="16" viewBox="0 0 14 16" style="left:1122px;top:566px"><use href="#i-chip"/></svg>
<div class="t it" style="left:1139.5px;top:566px;transform:scaleX(0.964)">S.M.A.R.T.: Samsung SSD 840 EVO ...</div>
<div class="bg str" style="left:1137px;top:583px;width:189px"></div>
<div class="bg str" style="left:1327px;top:583px;width:79px"></div>
<div class="bg str" style="left:1407px;top:583px;width:79px"></div>
<div class="bg str" style="left:1487px;top:583px;width:79px"></div>
<div class="bg str" style="left:1567px;top:583px;width:79px"></div>
<svg class="ic" width="9" height="17" viewBox="0 0 9 17" style="left:1124px;top:583px"><use href="#i-temp"/></svg>
<div class="t" style="left:1139px;top:583px">Drive Airflow Temperature</div>
<div class="t r" style="left:1326px;width:74px;top:583px">36 °C</div>
<div class="t r" style="left:1406px;width:74px;top:583px">33 °C</div>
<div class="t r" style="left:1486px;width:74px;top:583px">36 °C</div>
<div class="t r" style="left:1566px;width:74px;top:583px">34 °C</div>
<svg class="ic" width="14" height="14" viewBox="0 0 14 14" style="left:1122px;top:601px"><use href="#i-clock"/></svg>
<div class="t" style="left:1139px;top:600px">Drive Remaining Life</div>
<div class="t r" style="left:1326px;width:74px;top:600px">65.0 %</div>
<div class="t r" style="left:1406px;width:74px;top:600px">65.0 %</div>
<div class="t r" style="left:1486px;width:74px;top:600px">65.0 %</div>
<div class="bg str" style="left:1137px;top:617px;width:189px"></div>
<div class="bg str" style="left:1327px;top:617px;width:79px"></div>
<div class="bg str" style="left:1407px;top:617px;width:79px"></div>
<div class="bg str" style="left:1487px;top:617px;width:79px"></div>
<div class="bg str" style="left:1567px;top:617px;width:79px"></div>
<svg class="ic" width="14" height="14" viewBox="0 0 14 14" style="left:1122px;top:618px"><use href="#i-clock"/></svg>
<div class="t" style="left:1139px;top:617px">Drive Failure</div>
<div class="t r" style="left:1326px;width:74px;top:617px">No</div>
<div class="t r" style="left:1406px;width:74px;top:617px">No</div>
<div class="t r" style="left:1486px;width:74px;top:617px">No</div>
<svg class="ic" width="14" height="14" viewBox="0 0 14 14" style="left:1122px;top:635px"><use href="#i-clock"/></svg>
<div class="t" style="left:1139px;top:634px">Drive Warning</div>
<div class="t r" style="left:1326px;width:74px;top:634px">No</div>
<div class="t r" style="left:1406px;width:74px;top:634px">No</div>
<div class="t r" style="left:1486px;width:74px;top:634px">No</div>
<div class="bg str" style="left:1137px;top:651px;width:189px"></div>
<div class="bg str" style="left:1327px;top:651px;width:79px"></div>
<div class="bg str" style="left:1407px;top:651px;width:79px"></div>
<div class="bg str" style="left:1487px;top:651px;width:79px"></div>
<div class="bg str" style="left:1567px;top:651px;width:79px"></div>
<svg class="ic" width="14" height="14" viewBox="0 0 14 14" style="left:1122px;top:652px"><use href="#i-clock"/></svg>
<div class="t" style="left:1139px;top:651px">Total Host Writes</div>
<div class="t r" style="left:1326px;width:74px;top:651px">12,895 GB</div>
<div class="t r" style="left:1406px;width:74px;top:651px">12,895 GB</div>
<div class="t r" style="left:1486px;width:74px;top:651px">12,895 GB</div>
<div class="bg grp" style="left:1137px;top:685px;width:189px"></div>
<div class="bg grp" style="left:1327px;top:685px;width:79px"></div>
<div class="bg grp" style="left:1407px;top:685px;width:79px"></div>
<div class="bg grp" style="left:1487px;top:685px;width:79px"></div>
<div class="bg grp" style="left:1567px;top:685px;width:79px"></div>
<svg class="ic" width="14" height="16" viewBox="0 0 14 16" style="left:1122px;top:685px"><use href="#i-chip"/></svg>
<div class="t it" style="left:1139.5px;top:685px;transform:scaleX(0.955)">S.M.A.R.T.: SAMSUNG HD103UJ (S...</div>
<svg class="ic" width="9" height="17" viewBox="0 0 9 17" style="left:1124px;top:702px"><use href="#i-temp"/></svg>
<div class="t" style="left:1139px;top:702px">Drive Temperature</div>
<div class="t r" style="left:1326px;width:74px;top:702px">29 °C</div>
<div class="t r" style="left:1406px;width:74px;top:702px">29 °C</div>
<div class="t r" style="left:1486px;width:74px;top:702px">30 °C</div>
<div class="t r" style="left:1566px;width:74px;top:702px">29 °C</div>
<div class="bg str" style="left:1137px;top:719px;width:189px"></div>
<div class="bg str" style="left:1327px;top:719px;width:79px"></div>
<div class="bg str" style="left:1407px;top:719px;width:79px"></div>
<div class="bg str" style="left:1487px;top:719px;width:79px"></div>
<div class="bg str" style="left:1567px;top:719px;width:79px"></div>
<svg class="ic" width="9" height="17" viewBox="0 0 9 17" style="left:1124px;top:719px"><use href="#i-temp"/></svg>
<div class="t" style="left:1139px;top:719px">Drive Airflow Temperature</div>
<div class="t r" style="left:1326px;width:74px;top:719px">29 °C</div>
<div class="t r" style="left:1406px;width:74px;top:719px">29 °C</div>
<div class="t r" style="left:1486px;width:74px;top:719px">29 °C</div>
<div class="t r" style="left:1566px;width:74px;top:719px">29 °C</div>
<svg class="ic" width="14" height="14" viewBox="0 0 14 14" style="left:1122px;top:737px"><use href="#i-clock"/></svg>
<div class="t" style="left:1139px;top:736px">Drive Failure</div>
<div class="t r" style="left:1326px;width:74px;top:736px">No</div>
<div class="t r" style="left:1406px;width:74px;top:736px">No</div>
<div class="t r" style="left:1486px;width:74px;top:736px">No</div>
<div class="bg str" style="left:1137px;top:753px;width:189px"></div>
<div class="bg str" style="left:1327px;top:753px;width:79px"></div>
<div class="bg str" style="left:1407px;top:753px;width:79px"></div>
<div class="bg str" style="left:1487px;top:753px;width:79px"></div>
<div class="bg str" style="left:1567px;top:753px;width:79px"></div>
<svg class="ic" width="14" height="14" viewBox="0 0 14 14" style="left:1122px;top:754px"><use href="#i-clock"/></svg>
<div class="t" style="left:1139px;top:753px">Drive Warning</div>
<div class="t r" style="left:1326px;width:74px;top:753px">No</div>
<div class="t r" style="left:1406px;width:74px;top:753px">No</div>
<div class="t r" style="left:1486px;width:74px;top:753px">No</div>
<div class="bg grp" style="left:1137px;top:787px;width:189px"></div>
<div class="bg grp" style="left:1327px;top:787px;width:79px"></div>
<div class="bg grp" style="left:1407px;top:787px;width:79px"></div>
<div class="bg grp" style="left:1487px;top:787px;width:79px"></div>
<div class="bg grp" style="left:1567px;top:787px;width:79px"></div>
<svg class="ic" width="14" height="16" viewBox="0 0 14 16" style="left:1122px;top:787px"><use href="#i-chip"/></svg>
<div class="t it" style="left:1139.5px;top:787px;transform:scaleX(0.953)">S.M.A.R.T.: SAMSUNG HD103SJ (S...</div>
<svg class="ic" width="9" height="17" viewBox="0 0 9 17" style="left:1124px;top:804px"><use href="#i-temp"/></svg>
<div class="t" style="left:1139px;top:804px">Drive Temperature</div>
<div class="t r" style="left:1326px;width:74px;top:804px">33 °C</div>
<div class="t r" style="left:1406px;width:74px;top:804px">33 °C</div>
<div class="t r" style="left:1486px;width:74px;top:804px">34 °C</div>
<div class="t r" style="left:1566px;width:74px;top:804px">33 °C</div>
<div class="bg str" style="left:1137px;top:821px;width:189px"></div>
<div class="bg str" style="left:1327px;top:821px;width:79px"></div>
<div class="bg str" style="left:1407px;top:821px;width:79px"></div>
<div class="bg str" style="left:1487px;top:821px;width:79px"></div>
<div class="bg str" style="left:1567px;top:821px;width:79px"></div>
<svg class="ic" width="14" height="14" viewBox="0 0 14 14" style="left:1122px;top:822px"><use href="#i-clock"/></svg>
<div class="t" style="left:1139px;top:821px">Drive Failure</div>
<div class="t r" style="left:1326px;width:74px;top:821px">No</div>
<div class="t r" style="left:1406px;width:74px;top:821px">No</div>
<div class="t r" style="left:1486px;width:74px;top:821px">No</div>
<svg class="ic" width="14" height="14" viewBox="0 0 14 14" style="left:1122px;top:839px"><use href="#i-clock"/></svg>
<div class="t" style="left:1139px;top:838px">Drive Warning</div>
<div class="t r" style="left:1326px;width:74px;top:838px">No</div>
<div class="t r" style="left:1406px;width:74px;top:838px">No</div>
<div class="t r" style="left:1486px;width:74px;top:838px">No</div>
<div class="bg str" style="left:1137px;top:855px;width:189px"></div>
<div class="bg str" style="left:1327px;top:855px;width:79px"></div>
<div class="bg str" style="left:1407px;top:855px;width:79px"></div>
<div class="bg str" style="left:1487px;top:855px;width:79px"></div>
<div class="bg str" style="left:1567px;top:855px;width:79px"></div>
<div class="bg grp" style="left:1137px;top:872px;width:189px"></div>
<div class="bg grp" style="left:1327px;top:872px;width:79px"></div>
<div class="bg grp" style="left:1407px;top:872px;width:79px"></div>
<div class="bg grp" style="left:1487px;top:872px;width:79px"></div>
<div class="bg grp" style="left:1567px;top:872px;width:79px"></div>
<svg class="ic" width="14" height="16" viewBox="0 0 14 16" style="left:1122px;top:872px"><use href="#i-chip"/></svg>
<div class="t it" style="left:1139.5px;top:872px;transform:scaleX(0.944)">Drive: Samsung SSD 840 EVO 120G...</div>
<div class="bg str" style="left:1137px;top:889px;width:189px"></div>
<div class="bg str" style="left:1327px;top:889px;width:79px"></div>
<div class="bg str" style="left:1407px;top:889px;width:79px"></div>
<div class="bg str" style="left:1487px;top:889px;width:79px"></div>
<div class="bg str" style="left:1567px;top:889px;width:79px"></div>
<svg class="ic" width="14" height="14" viewBox="0 0 14 14" style="left:1122px;top:890px"><use href="#i-clock"/></svg>
<div class="t" style="left:1139px;top:889px">Read Activity</div>
<div class="t r" style="left:1326px;width:74px;top:889px">0.0 %</div>
<div class="t r" style="left:1406px;width:74px;top:889px">0.0 %</div>
<div class="t r" style="left:1486px;width:74px;top:889px">100.0 %</div>
<div class="t r" style="left:1566px;width:74px;top:889px">41.0 %</div>
<svg class="ic" width="14" height="14" viewBox="0 0 14 14" style="left:1122px;top:907px"><use href="#i-clock"/></svg>
<div class="t" style="left:1139px;top:906px">Write Activity</div>
<div class="t r" style="left:1326px;width:74px;top:906px">2.6 %</div>
<div class="t r" style="left:1406px;width:74px;top:906px">0.0 %</div>
<div class="t r" style="left:1486px;width:74px;top:906px">58.2 %</div>
<div class="t r" style="left:1566px;width:74px;top:906px">6.5 %</div>
<div class="bg str" style="left:1137px;top:923px;width:189px"></div>
<div class="bg str" style="left:1327px;top:923px;width:79px"></div>
<div class="bg str" style="left:1407px;top:923px;width:79px"></div>
<div class="bg str" style="left:1487px;top:923px;width:79px"></div>
<div class="bg str" style="left:1567px;top:923px;width:79px"></div>
<svg class="ic" width="14" height="14" viewBox="0 0 14 14" style="left:1122px;top:924px"><use href="#i-clock"/></svg>
<div class="t" style="left:1139px;top:923px">Total Activity</div>
<div class="t r" style="left:1326px;width:74px;top:923px">2.6 %</div>
<div class="t r" style="left:1406px;width:74px;top:923px">0.0 %</div>
<div class="t r" style="left:1486px;width:74px;top:923px">100.0 %</div>
<div class="t r" style="left:1566px;width:74px;top:923px">43.8 %</div>
<svg class="ic" width="14" height="14" viewBox="0 0 14 14" style="left:1122px;top:941px"><use href="#i-clock"/></svg>
<div class="t" style="left:1139px;top:940px">Read Rate</div>
<div class="t r" style="left:1326px;width:74px;top:940px">0.000 MB/s</div>
<div class="t r" style="left:1406px;width:74px;top:940px">0.000 MB/s</div>
<div class="t r" style="left:1486px;width:74px;top:940px">57.535 MB/s</div>
<div class="t r" style="left:1566px;width:74px;top:940px">1.439 MB/s</div>
<div class="frame" style="left:8px;top:31px;width:1662px;height:1px"></div>
<div class="frame" style="left:8px;top:955px;width:1662px;height:1px"></div>
<div class="frame" style="left:8px;top:31px;width:1px;height:925px;background:#9aa4b4"></div>
<div class="frame" style="left:561px;top:31px;width:2px;height:925px;background:#8a8a8a"></div>
<div class="frame" style="left:1115px;top:31px;width:2px;height:925px;background:#8a8a8a"></div>
<div class="frame" style="left:1669px;top:31px;width:1px;height:925px"></div>
</div>

<div class="abs" style="left:1653px;top:32px;width:16px;height:923px;background:#f0f0f0"></div>
<div class="abs" style="left:1653px;top:49px;width:16px;height:380px;background:#cdcdcd"></div>
<svg class="abs" style="left:1656px;top:38px" width="10" height="8" viewBox="0 0 10 8"><path d="M1 6L5 2L9 6" fill="none" stroke="#606060" stroke-width="1.6"/></svg>
<svg class="abs" style="left:1656px;top:941px" width="10" height="8" viewBox="0 0 10 8"><path d="M1 2L5 6L9 2" fill="none" stroke="#606060" stroke-width="1.6"/></svg>

<div class="abs" style="left:8px;top:956px;width:1664px;height:53px;background:#f0f0f0"></div><div class="tb" style="left:9px;top:963px;width:42px;height:35px"><svg width="42" height="35" viewBox="0 0 42 35" style="position:absolute;left:-1px;top:-1px">
<path d="M5 18 L12.5 10 L12.5 15 L18.5 15 L18.5 21.5 L12.5 21.5 L12.5 26 Z" fill="#2e8de0" stroke="#9fd3ff" stroke-width="0.8"/>
<path d="M37 18 L29.5 10 L29.5 15 L23 15 L23 21.5 L29.5 21.5 L29.5 26 Z" fill="#2e8de0" stroke="#9fd3ff" stroke-width="0.8"/>
</svg></div><div class="tb" style="left:53px;top:963px;width:42px;height:35px"><svg width="42" height="35" viewBox="0 0 42 35" style="position:absolute;left:-1px;top:-1px">
<path d="M20.5 18 L13.5 10.5 L13.5 15 L6.5 15 L6.5 21.5 L13.5 21.5 L13.5 26 Z" fill="#2e8de0" stroke="#9fd3ff" stroke-width="0.8" transform="translate(0,0) scale(1,1)"/>
<path d="M21.5 18 L28.5 10.5 L28.5 15 L35 15 L35 21.5 L28.5 21.5 L28.5 26 Z" fill="#2e8de0" stroke="#9fd3ff" stroke-width="0.8"/>
</svg></div><div class="tb" style="left:1371px;top:963px;width:42px;height:35px"><svg width="42" height="35" viewBox="0 0 42 35" style="position:absolute;left:-1px;top:-1px">
<defs><linearGradient id="gnet" x1="0" y1="0" x2="1" y2="1"><stop offset="0" stop-color="#7cc6ff"/><stop offset="1" stop-color="#0a5fc0"/></linearGradient></defs>
<path d="M20 13 H29 V17" fill="none" stroke="#8a8a8a" stroke-width="1.2"/>
<path d="M6 4 L19 6 L18 17 L5 15 Z" fill="url(#gnet)" stroke="#3b6e9a" stroke-width="0.6"/>
<path d="M8 16 L14 19 L17 17" fill="#9a9a9a"/>
<path d="M21 18 L34 20 L33 31 L20 29 Z" fill="url(#gnet)" stroke="#3b6e9a" stroke-width="0.6"/>
<path d="M23 30 L30 33 L34 32" fill="none" stroke="#9a9a9a" stroke-width="1.5"/>
</svg></div><div class="abs" style="left:1438px;top:973px;font-size:11px;white-space:nowrap">0:05:03</div><div class="tb" style="left:1482px;top:963px;width:42px;height:35px"><svg width="34" height="34" viewBox="0 0 34 34" style="position:absolute;left:4px;top:0px">
<circle cx="17" cy="17.5" r="15.3" fill="#fafafa" stroke="#2a2a2a" stroke-width="1.1"/>
<g stroke="#222" stroke-width="1.5">
<path d="M17 3V6.5M17 28.5V32M2.5 17.5H6M28 17.5H31.5"/>
<path d="M24.4 4.8L23.2 7M9.6 4.8L10.8 7M29.7 10.1L27.5 11.3M4.3 10.1L6.5 11.3M29.7 24.9L27.5 23.7M4.3 24.9L6.5 23.7M24.4 30.2L23.2 28M9.6 30.2L10.8 28"/>
</g>
<path d="M17 17.5 L18.5 5.5 M17 17.5 H25" stroke="#000" stroke-width="2.2" fill="none"/>
</svg></div><div class="tb" style="left:1527px;top:963px;width:42px;height:35px"><svg width="42" height="35" viewBox="0 0 42 35" style="position:absolute;left:-1px;top:-1px">
<path d="M10 3 H26 L31 8 V31 H10 Z" fill="#fbfbfb" stroke="#c8c8c8" stroke-width="0.8"/>
<path d="M26 3 V8 H31" fill="#e0e0e0" stroke="#c8c8c8" stroke-width="0.8"/>
<g stroke="#d4d4d4" stroke-width="0.8"><path d="M13 11H28M13 14H28M13 17H28M13 20H28M13 23H28M13 26H26M17 10V28M22 10V28"/></g>
<path d="M26 20 H30 V24 H34 V28 H30 V32 H26 V28 H22 V24 H26 Z" fill="#a8d040" stroke="#7ea82a" stroke-width="0.8"/>
</svg></div><div class="tb" style="left:1573px;top:963px;width:42px;height:35px"><svg width="42" height="35" viewBox="0 0 42 35" style="position:absolute;left:-1px;top:-1px">
<defs><radialGradient id="ggear" cx="40%" cy="35%" r="70%"><stop offset="0" stop-color="#f4f4f4"/><stop offset="1" stop-color="#9a9a9a"/></radialGradient></defs>
<g transform="translate(21,17.5)">
<path d="M-2.5 -14 H2.5 L3.2 -10.5 L6.5 -9.2 L9.5 -11.2 L12.8 -7.9 L10.8 -4.9 L12.1 -1.6 L15.5 -0.9 V4.1 L12.1 4.8 L10.8 8.1 L12.8 11.1 L9.5 14.4 L6.5 12.4 L3.2 13.7 L2.5 17 H-2.5 L-3.2 13.7 L-6.5 12.4 L-9.5 14.4 L-12.8 11.1 L-10.8 8.1 L-12.1 4.8 L-15.5 4.1 V-0.9 L-12.1 -1.6 L-10.8 -4.9 L-12.8 -7.9 L-9.5 -11.2 L-6.5 -9.2 L-3.2 -10.5 Z" transform="translate(0,-1.5) scale(0.95)" fill="url(#ggear)" stroke="#a8a8a8" stroke-width="0.7"/>
<circle cx="0" cy="0" r="6.5" fill="#dcdcdc" stroke="#8a8a8a" stroke-width="1.6"/>
</g>
</svg></div><div class="abs" style="left:1620px;top:963px;width:42px;height:35px;border:2px solid #1c69b0;background:#e3eef8"><svg width="42" height="35" viewBox="0 0 42 35" style="position:absolute;left:-2px;top:-2px">
<defs><linearGradient id="gx" x1="0" y1="0" x2="1" y2="1"><stop offset="0" stop-color="#1e6fb5"/><stop offset="1" stop-color="#5ab0ee"/></linearGradient></defs>
<path d="M10 9 L15 5.5 L21 12 L27 5.5 L32 9 L25.5 17.5 L32 26 L27 30 L21 23 L15 30 L10 26 L16.5 17.5 Z" fill="url(#gx)"/>
</svg></div>
<div class="abs" style="left:0;top:1010px;width:1680px;height:40px;background:#020204"></div><div class="abs" style="left:587px;top:1010px;width:48px;height:40px;background:#333"></div><div class="abs" style="left:150px;top:1048px;width:40px;height:2px;background:#76b9ed"></div><div class="abs" style="left:493px;top:1048px;width:41px;height:2px;background:#76b9ed"></div><div class="abs" style="left:542px;top:1048px;width:41px;height:2px;background:#76b9ed"></div><div class="abs" style="left:587px;top:1048px;width:48px;height:2px;background:#76b9ed"></div><svg class="abs" style="left:16px;top:1022px" width="16" height="16" viewBox="0 0 16 16"><path d="M0 2.2 L6.6 1.3 V7.6 H0 Z M7.4 1.2 L16 0 V7.6 H7.4 Z M0 8.4 H6.6 V14.7 L0 13.8 Z M7.4 8.4 H16 V16 L7.4 14.8 Z" fill="#fff"/></svg><svg class="abs" style="left:63px;top:1022px" width="17" height="17" viewBox="0 0 17 17"><circle cx="11" cy="6" r="5.2" fill="none" stroke="#fff" stroke-width="1.3"/><path d="M7.3 9.7 L1 16" stroke="#fff" stroke-width="1.4"/></svg><svg class="abs" style="left:109px;top:1023px" width="20" height="15" viewBox="0 0 20 15"><rect x="4.5" y="0.5" width="11" height="13" fill="none" stroke="#fff" stroke-width="1.2"/><path d="M2.5 2.5 H0.6 V11.5 H2.5 M17.5 2.5 H19.4 V11.5 H17.5" fill="none" stroke="#fff" stroke-width="1.2"/></svg><svg class="abs" style="left:159px;top:1020px" width="22" height="20" viewBox="0 0 22 20"><path d="M0 2 H8 L10 4 H22 V19 H0 Z" fill="#f8d775"/><path d="M0 5 H22 V19 H0 Z" fill="#fbe3a0"/><path d="M5 12 H17 V19 H14 V15 H8 V19 H5 Z" fill="#2aa3dc"/></svg><svg class="abs" style="left:208px;top:1019px" width="22" height="22" viewBox="0 0 22 22"><path d="M11.5 1 C5 1 1 6 1 11.5 C1 17.5 6 21 11 21 C14.5 21 17.5 19.8 19.8 18 V13.8 C17.5 16 15 17.5 12 17.5 C8.5 17.5 6.8 15.2 6.8 13 H21 C21.5 6 17.5 1 11.5 1 Z M7 9.5 C7.5 7 9.5 5.2 12 5.2 C14.5 5.2 16.3 7 16.3 9.5 Z" fill="#1e7fd6"/></svg><svg class="abs" style="left:256px;top:1019px" width="23" height="23" viewBox="0 0 23 23"><circle cx="11.5" cy="11.5" r="11" fill="#db4437"/><path d="M11.5 11.5 L2 17 A11 11 0 0 1 3 5 Z" fill="#0f9d58"/><path d="M11.5 11.5 L2 17 A11 11 0 0 0 21.9 14 Z" fill="#0f9d58"/><path d="M11.5 11.5 L21.9 14 A11 11 0 0 0 20.5 5.5 L11.5 6 Z" fill="#ffcd40"/><circle cx="11.5" cy="11.5" r="5" fill="#fff"/><circle cx="11.5" cy="11.5" r="3.8" fill="#4285f4"/></svg><svg class="abs" style="left:304px;top:1020px" width="23" height="20" viewBox="0 0 23 20"><rect x="0.5" y="0.5" width="22" height="18" fill="#0c0c0c" stroke="#bdbdbd" stroke-width="1"/><rect x="1" y="1" width="21" height="2" fill="#cfcfcf"/><text x="3" y="10" font-size="6" fill="#ddd" font-family="Liberation Mono">C:\</text><path d="M12 10 H18" stroke="#ddd" stroke-width="1"/></svg><svg class="abs" style="left:353px;top:1018px" width="23" height="23" viewBox="0 0 23 23"><path d="M5 1 L21 3 V17 L5 15 Z" fill="#3d6fd0" stroke="#c7d6ef" stroke-width="1"/><path d="M7 4 L19 5.5 V14 L7 12.8 Z" fill="#a8c5f0"/><circle cx="6" cy="13" r="5" fill="#d8e6f5" opacity="0.9"/><path d="M9 20 L15 22 L20 20" fill="none" stroke="#bbb" stroke-width="2"/></svg><svg class="abs" style="left:402px;top:1018px" width="24" height="23" viewBox="0 0 24 23"><path d="M3 6 Q7 3 11 5 L10 12 Q6 10 2 13 Z" fill="#e8553a"/><path d="M12 5 Q16 7 22 4 L20 11 Q15 14 11 12 Z" fill="#6fbf3f"/><path d="M2 14 Q6 11 10 13 L9 20 Q5 18 1 21 Z" fill="#3b8fe0"/><path d="M11 13 Q15 15 20 12 L19 19 Q14 22 10 20 Z" fill="#f5c330"/><circle cx="8" cy="11" r="4" fill="#cfe3f2" opacity="0.85"/></svg><svg class="abs" style="left:454px;top:1018px" width="19" height="24" viewBox="0 0 19 24"><rect x="0" y="0" width="19" height="24" fill="#fff"/><rect x="2.5" y="2.5" width="14" height="4" fill="#000"/><path d="M3.0 9.0 h3 v3 z" fill="#000"/><path d="M3.0 13.5 h3 v3 z" fill="#000"/><path d="M3.0 18.0 h3 v3 z" fill="#000"/><path d="M7.5 9.0 h3 v3 z" fill="#000"/><path d="M7.5 13.5 h3 v3 z" fill="#000"/><path d="M7.5 18.0 h3 v3 z" fill="#000"/><path d="M12.0 9.0 h3 v3 z" fill="#000"/><path d="M12.0 13.5 h3 v3 z" fill="#000"/><path d="M12.0 18.0 h3 v3 z" fill="#000"/></svg><svg class="abs" style="left:501px;top:1018px" width="24" height="24" viewBox="0 0 24 24"><rect x="0" y="0" width="24" height="24" fill="#4a2a8a"/><rect x="5" y="5" width="14" height="14" fill="none" stroke="#fff" stroke-width="1.2"/><rect x="8.5" y="8.5" width="7" height="7" fill="#fff"/><g stroke="#fff" stroke-width="0.8"><path d="M7 2.5V4.5M10 2.5V4.5M13 2.5V4.5M16 2.5V4.5M7 19.5V21.5M10 19.5V21.5M13 19.5V21.5M16 19.5V21.5M2.5 7H4.5M2.5 10H4.5M2.5 13H4.5M2.5 16H4.5M19.5 7H21.5M19.5 10H21.5M19.5 13H21.5M19.5 16H21.5"/></g></svg><svg class="abs" style="left:549px;top:1019px" width="23" height="23" viewBox="0 0 23 23"><rect x="0.8" y="0.8" width="21.4" height="21.4" fill="#1b2230" stroke="#6fa8c8" stroke-width="1.5"/><path d="M5 12 L9.5 17 L18 5" fill="none" stroke="#e08a48" stroke-width="2.6"/></svg><svg class="abs" style="left:599px;top:1018px" width="24" height="24" viewBox="0 0 24 24"><defs><linearGradient id="gthw" x1="0" y1="0" x2="0" y2="1"><stop offset="0" stop-color="#6fb0d0"/><stop offset="0.5" stop-color="#0b4a66"/><stop offset="0.52" stop-color="#111"/><stop offset="1" stop-color="#000"/></linearGradient></defs><rect x="0" y="0" width="24" height="24" rx="3" fill="url(#gthw)"/><rect x="5" y="3" width="3" height="9" fill="#e8fbff"/><rect x="10.5" y="6" width="3" height="6" fill="#e8fbff"/><rect x="16" y="9" width="3" height="3" fill="#e8fbff"/><rect x="5" y="14" width="3" height="7" rx="1" fill="#fff"/><rect x="10.5" y="14" width="3" height="7" rx="1" fill="#fff"/><rect x="16" y="14" width="3" height="7" rx="1" fill="#fff"/></svg><svg class="abs" style="left:1404px;top:1023px" width="14" height="14" viewBox="0 0 14 14"><defs><linearGradient id="gtrh" x1="0" y1="0" x2="0" y2="1"><stop offset="0" stop-color="#7fc0e0"/><stop offset="1" stop-color="#1a6a90"/></linearGradient></defs><rect x="0" y="0" width="14" height="7" fill="url(#gtrh)"/><rect x="2" y="1" width="2" height="6" fill="#fff"/><rect x="6" y="3" width="2" height="4" fill="#fff"/><rect x="10" y="5" width="2" height="2" fill="#fff"/><rect x="2" y="8" width="2" height="5" fill="#fff"/><rect x="6" y="8" width="2" height="5" fill="#fff"/><rect x="10" y="8" width="2" height="5" fill="#fff"/></svg><svg class="abs" style="left:1428px;top:1023px" width="15" height="14" viewBox="0 0 15 14"><path d="M1 13 L4 6 L6 9 L8 3 L10 8 L12 6 L14 13 Z" fill="#eee"/></svg><div class="abs" style="left:1451px;top:1022px;width:16px;height:16px;background:#2ca52c;color:#fff;font-size:11px;line-height:16px;text-align:center">64</div><svg class="abs" style="left:1478px;top:1021px" width="14" height="17" viewBox="0 0 14 17"><rect x="2" y="0.5" width="5" height="4" fill="none" stroke="#fff" stroke-width="1"/><rect x="0.5" y="4.5" width="8" height="11" fill="none" stroke="#fff" stroke-width="1"/><path d="M8 14 L10 16 L13 12" fill="none" stroke="#ddd" stroke-width="1"/></svg><svg class="abs" style="left:1499px;top:1021px" width="17" height="17" viewBox="0 0 17 17"><ellipse cx="8" cy="10" rx="7" ry="5" fill="none" stroke="#ddd" stroke-width="1.2" transform="rotate(35 8 10)"/><circle cx="6" cy="8" r="2" fill="#fff"/><path d="M3 14 L7 10" stroke="#fff" stroke-width="1.5"/></svg><svg class="abs" style="left:1523px;top:1022px" width="17" height="16" viewBox="0 0 17 16"><rect x="4.5" y="3.5" width="11" height="8" fill="none" stroke="#fff" stroke-width="1"/><path d="M10 11.5 V14.5 M6 14.5 H14" stroke="#fff" stroke-width="1"/><rect x="0.5" y="0.5" width="4" height="3" fill="none" stroke="#fff" stroke-width="0.9"/></svg><svg class="abs" style="left:1547px;top:1022px" width="16" height="16" viewBox="0 0 16 16"><path d="M1 6 H4 L8 2 V14 L4 10 H1 Z" fill="none" stroke="#fff" stroke-width="1.1"/><path d="M10.5 5.5 Q12 8 10.5 10.5 M12.5 3.5 Q15 8 12.5 12.5" fill="none" stroke="#fff" stroke-width="1.1"/></svg><svg class="abs" style="left:1571px;top:1022px" width="16" height="16" viewBox="0 0 16 16"><path d="M0.6 1 H15.4 V12 H9 L6 15 V12 H0.6 Z" fill="none" stroke="#fff" stroke-width="1.1"/><path d="M3 4.5 H13 M3 7 H13 M3 9.5 H10" stroke="#fff" stroke-width="1"/></svg><div class="abs" style="left:1600px;top:1013.5px;width:66px;text-align:center;color:#fff;font-size:11.5px;line-height:14px">16:37</div><div class="abs" style="left:1598px;top:1031px;width:70px;text-align:center;color:#fff;font-size:11.5px;line-height:14px;letter-spacing:-0.4px">2017. 10. 14.</div><div class="abs" style="left:1675px;top:1010px;width:1px;height:40px;background:#555"></div>
</body></html>
